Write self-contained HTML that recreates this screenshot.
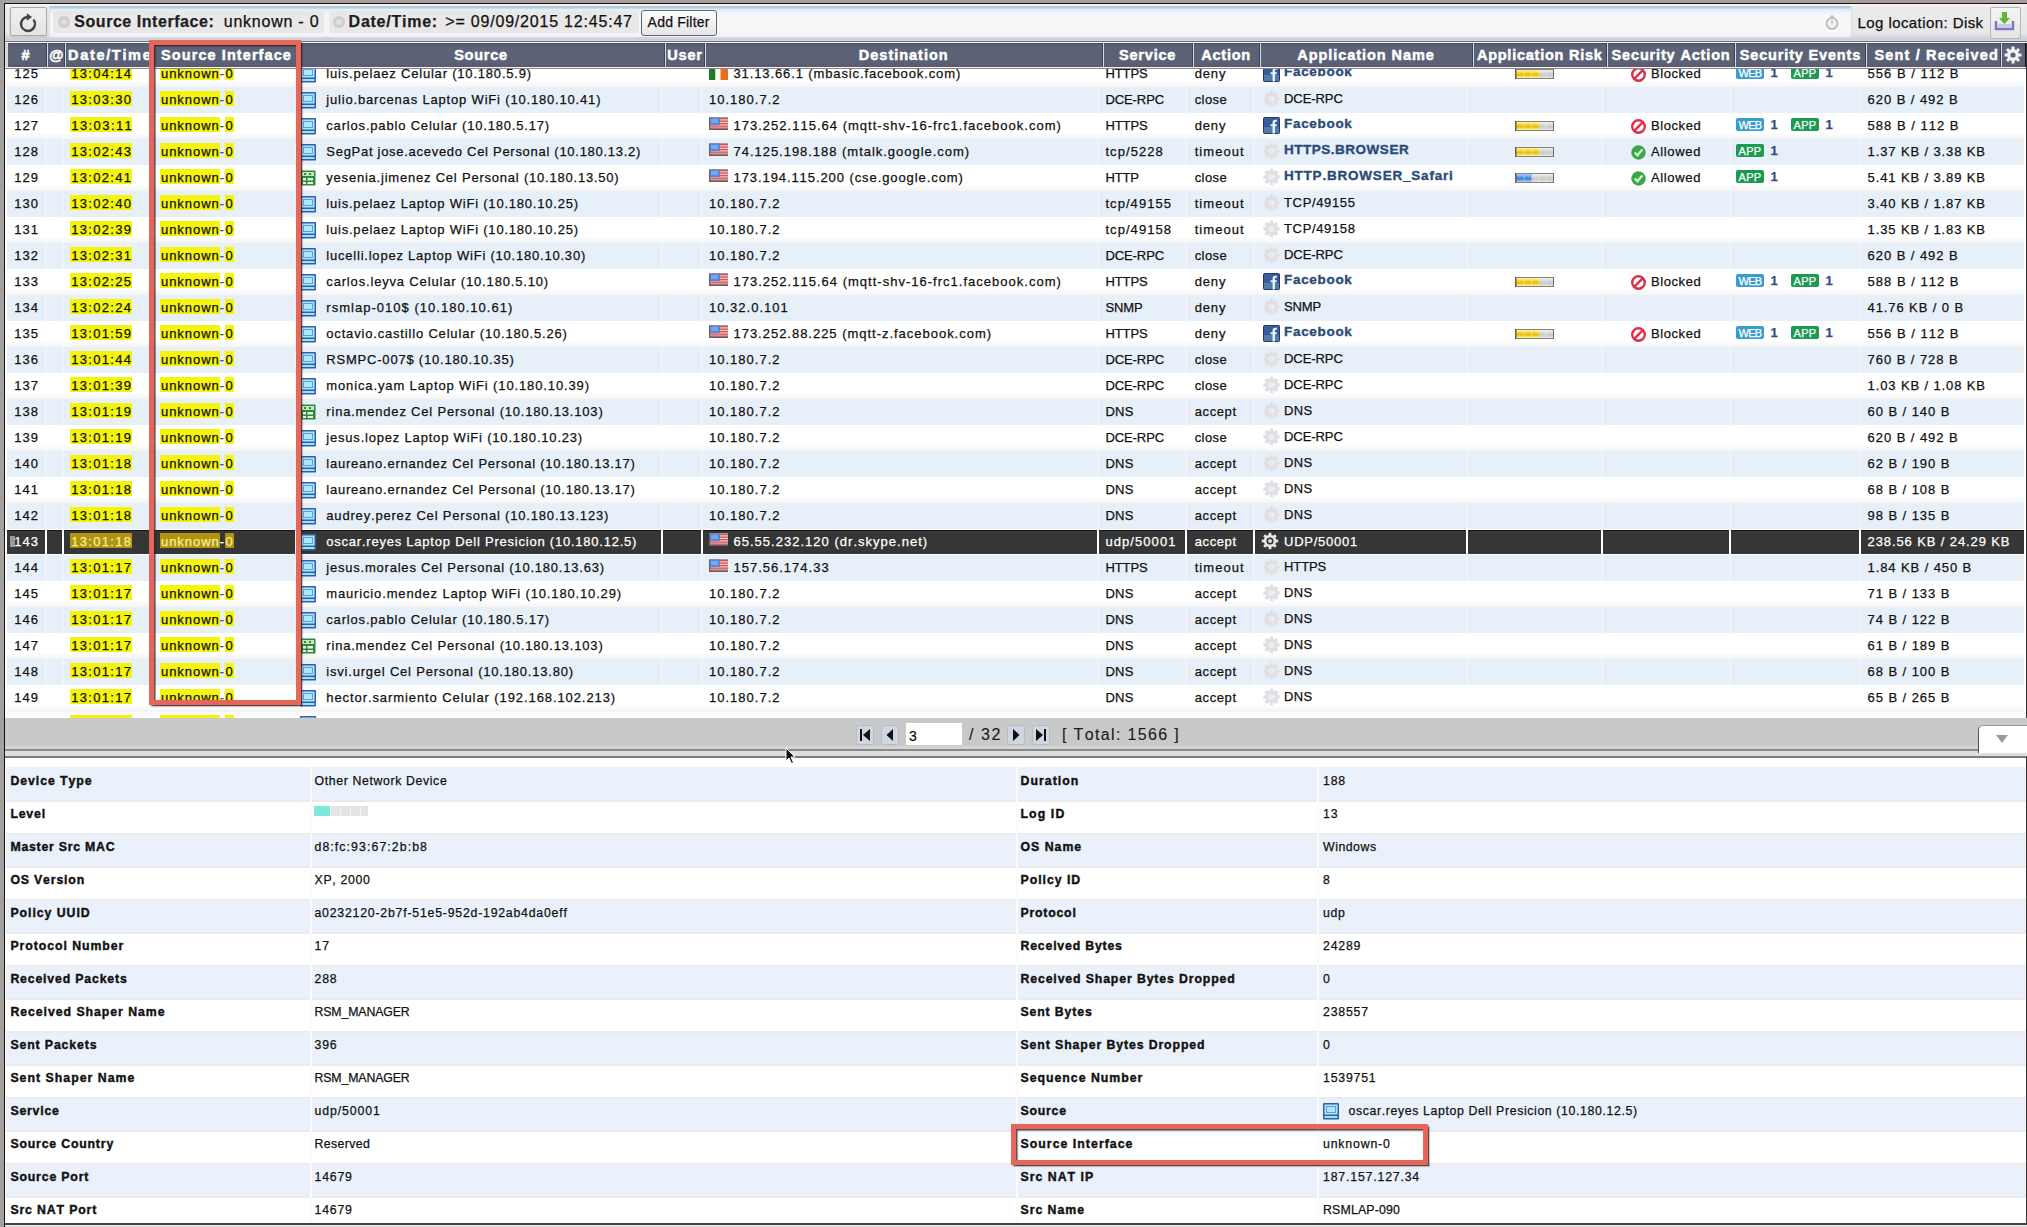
<!DOCTYPE html><html><head><meta charset="utf-8"><style>
html,body{margin:0;padding:0;}
body{width:2027px;height:1227px;overflow:hidden;position:relative;font-family:"Liberation Sans",sans-serif;font-kerning:none;}
div,span,svg{position:absolute;}
span{white-space:nowrap;line-height:20px;-webkit-text-stroke:0.25px currentColor;}
</style></head><body>
<div style="left:0px;top:0px;width:2027px;height:1227px;background:#a3a09e"></div>
<div style="left:65px;top:0px;width:1962px;height:3px;background:#a99d9b"></div>
<div style="left:4px;top:3px;width:2023px;height:1224px;background:#111"></div>
<div style="left:5px;top:4px;width:2022px;height:37px;background:linear-gradient(#f8f8f8,#ebebeb 3px,#e8e8e8 28px,#dcdde3 32px,#c9cdd8 36px)"></div>
<div style="left:10px;top:7px;width:35px;height:27px;background:linear-gradient(#f0f0f0,#e4e4e4);border:1px solid #a9a9a9;border-radius:2px;box-shadow:0 2px 2px #d8c8c8"></div>
<svg style="left:17px;top:12px" width="22" height="22" viewBox="0 0 22 22"><path d="M16.4 7.5 A7 7 0 1 1 10.4 5.0" fill="none" stroke="#444" stroke-width="2.4"/><path d="M15 5 L9.8 1.2 L9.8 8.8 Z" fill="#444"/></svg>
<div style="left:49px;top:5.5px;width:1801px;height:31px;background:linear-gradient(#b9c9de 0,#b9c9de 2px,#dcedf9 3px,#f5f6f7 8px,#f7f7f7 26px,#eef0fa 31px);border-left:1px solid #d8e0ee;border-right:1px solid #d8e0ee"></div>
<div style="left:53px;top:11px;width:271px;height:22px;background:#e9e7e7;border-radius:3px"></div>
<div style="left:329px;top:11px;width:310px;height:22px;background:#e9e7e7;border-radius:3px"></div>
<svg style="left:57px;top:15px" width="14" height="14" viewBox="0 0 14 14"><circle cx="7" cy="7" r="6" fill="#cdcdcd"/><circle cx="7" cy="7" r="3" fill="#e0e0e0"/></svg>
<svg style="left:332px;top:15px" width="14" height="14" viewBox="0 0 14 14"><circle cx="7" cy="7" r="6" fill="#cdcdcd"/><circle cx="7" cy="7" r="3" fill="#e0e0e0"/></svg>
<span style="left:74.30px;top:12.46px;font-size:16px;font-weight:bold;color:#1e1e1e;letter-spacing:0.546px;">Source Interface:</span>
<span style="left:223.80px;top:12.46px;font-size:16px;color:#111;letter-spacing:0.758px;">unknown - 0</span>
<span style="left:348.60px;top:12.46px;font-size:16px;font-weight:bold;color:#1e1e1e;letter-spacing:0.749px;">Date/Time:</span>
<span style="left:445.30px;top:12.46px;font-size:16px;color:#111;letter-spacing:0.798px;">&gt;= 09/09/2015 12:45:47</span>
<div style="left:641px;top:9.5px;width:74px;height:24px;background:linear-gradient(#fdfdfd,#e6e6e6);border:1.5px solid #5e6575;border-radius:3px"></div>
<span style="left:647.60px;top:12.15px;font-size:14px;color:#111;letter-spacing:0.209px;">Add Filter</span>
<svg style="left:1825px;top:15px" width="14" height="15" viewBox="0 0 14 15"><circle cx="7" cy="8.5" r="5.5" fill="#f0f0f0" stroke="#b8b8b8" stroke-width="1.6"/><rect x="5.5" y="0.5" width="3" height="2" fill="#b8b8b8"/><path d="M7 8.5 L7 5.5" stroke="#aaa" stroke-width="1.2"/></svg>
<span style="left:1857.50px;top:13.30px;font-size:15px;color:#111;letter-spacing:0.422px;">Log location: Disk</span>
<div style="left:1990px;top:7px;width:29px;height:30px;background:linear-gradient(#f4f4f4,#e4e4e4);border:1px solid #b4b4b4;border-radius:2px"></div>
<svg style="left:1993px;top:11px" width="23" height="22" viewBox="0 0 23 22"><path d="M3 10 V18 H20 V10" fill="none" stroke="#7a7ab8" stroke-width="2.4"/><rect x="5" y="13" width="13" height="3" fill="#c8c8ec"/><path d="M9 1 H14 V7 H17 L11.5 13 L6 7 H9 Z" fill="#5cb82e"/></svg>
<div style="left:5px;top:40px;width:2022px;height:1px;background:#d4d8e0"></div>
<div style="left:5px;top:67px;width:2021px;height:651px;background:#fff;overflow:hidden">
<div style="left:2px;top:-6px;width:2017px;height:26px;background:linear-gradient(#fff 75%,#f4f4f6)"></div>
<span style="left:9.30px;top:-3.50px;font-size:13px;color:#111;letter-spacing:0.974px;">125</span>
<div style="left:65.3px;top:-2px;width:61.439600000000006px;height:15px;background:#f4f40c"></div>
<span style="left:66.30px;top:-3.50px;font-size:13px;color:#111;letter-spacing:1.292px;">13:04:14</span>
<div style="left:155px;top:-2px;width:59.6821px;height:15px;background:#f4f40c"></div>
<div style="left:219.5387px;top:-2px;width:9.7044px;height:15px;background:#f4f40c"></div>
<span style="left:156.00px;top:-3.50px;font-size:13px;color:#111;letter-spacing:0.949px;">unknown</span>
<span style="left:214.68px;top:-3.50px;font-size:13px;color:#555;letter-spacing:1.527px;">-</span>
<span style="left:220.54px;top:-3.50px;font-size:13px;color:#111;letter-spacing:0.974px;">0</span>
<svg style="left:295px;top:-1px" width="16" height="17" viewBox="0 0 16 17"><rect x="0" y="0" width="16" height="16.5" rx="1" fill="#2e62a6"/><rect x="1.5" y="1.5" width="13" height="10" fill="#aee6fb"/><rect x="3.5" y="3.5" width="9" height="6" fill="none" stroke="#5aa2d8" stroke-width="1"/><rect x="1.5" y="13" width="13" height="2" fill="#9fe0fa"/></svg>
<span style="left:321.30px;top:-3.50px;font-size:13px;color:#111;letter-spacing:0.803px;">luis.pelaez Celular (10.180.5.9)</span>
<svg style="left:704px;top:1px" width="19" height="12" viewBox="0 0 19 12"><rect width="6.5" height="12" fill="#1f7a2a"/><rect x="6.5" width="5" height="12" fill="#f4fff0"/><rect x="11.5" width="7.5" height="12" fill="#e8701c"/></svg>
<span style="left:728.50px;top:-3.50px;font-size:13px;color:#111;letter-spacing:0.881px;">31.13.66.1 (mbasic.facebook.com)</span>
<span style="left:1100.40px;top:-3.50px;font-size:13px;color:#111;letter-spacing:-0.086px;">HTTPS</span>
<span style="left:1189.70px;top:-3.50px;font-size:13px;color:#111;letter-spacing:0.834px;">deny</span>
<svg style="left:1258px;top:-2px" width="17" height="17" viewBox="0 0 17 17"><rect x="0.5" y="0.5" width="16" height="16" rx="1" fill="#3a5c98" stroke="#223866"/><rect x="1" y="10" width="15" height="6" fill="#5478aa"/><path d="M9.6 16.5 V9.3 H7.6 V7.2 H9.6 V5.6 C9.6 3.6 10.6 2.7 12.4 2.7 H13.8 V4.7 H12.8 C12.1 4.7 11.9 5.1 11.9 5.7 V7.2 H13.8 L13.5 9.3 H11.9 V16.5 Z" fill="#eef8ff"/></svg>
<span style="left:1279.00px;top:-4.68px;font-size:13.5px;font-weight:bold;color:#2a4b78;letter-spacing:0.691px;-webkit-text-stroke:0.35px currentColor;">Facebook</span>
<svg style="left:1510px;top:2px" width="39" height="10" viewBox="0 0 39 10"><defs><linearGradient id="ry3" x1="0" y1="0" x2="0" y2="1"><stop offset="0" stop-color="#fff6a0"/><stop offset="0.6" stop-color="#e8b800"/><stop offset="1" stop-color="#fff6a0"/></linearGradient><linearGradient id="rg" x1="0" y1="0" x2="0" y2="1"><stop offset="0" stop-color="#f6f6f8"/><stop offset="0.6" stop-color="#c9cac4"/><stop offset="1" stop-color="#eeeeee"/></linearGradient></defs><rect x="0" y="0" width="39" height="10" fill="url(#rg)"/><rect x="1" y="1" width="23.4" height="8" fill="url(#ry3)"/><rect x="8.8" y="2" width="0.8" height="6" fill="rgba(255,255,255,.45)"/><rect x="16.1" y="2" width="0.8" height="6" fill="rgba(255,255,255,.45)"/><rect x="23.4" y="2" width="0.8" height="6" fill="rgba(255,255,255,.45)"/><rect x="30.7" y="2" width="0.8" height="6" fill="rgba(255,255,255,.45)"/><rect x="0" y="0" width="39" height="1" fill="#8a8676"/><rect x="0" y="9" width="39" height="1" fill="#8a8676"/><rect x="0" y="0" width="1.5" height="10" fill="#6e5e48"/><rect x="38" y="0" width="1" height="10" fill="#6a6a6a"/></svg>
<svg style="left:1626px;top:0px" width="15" height="15" viewBox="0 0 15 15"><circle cx="7.5" cy="7.5" r="6.3" fill="none" stroke="#d9304a" stroke-width="2.4"/><path d="M3.4 11.6 L11.6 3.4" stroke="#d9304a" stroke-width="2.4"/></svg>
<span style="left:1646.00px;top:-3.50px;font-size:13px;color:#111;letter-spacing:0.578px;">Blocked</span>
<div style="left:1731px;top:-1px;width:28px;height:13px;border-radius:2px;background:#3a9ccc;"></div>
<span style="left:1733.50px;top:-4.31px;font-size:11px;color:#fff;letter-spacing:-0.686px;">WEB</span>
<span style="left:1765.50px;top:-4.00px;font-size:13px;font-weight:bold;color:#3a4c86;letter-spacing:1.942px;">1</span>
<div style="left:1786px;top:-1px;width:28px;height:13px;border-radius:2px;background:#1c9a50;"></div>
<span style="left:1788.50px;top:-4.31px;font-size:11px;color:#fff;letter-spacing:0.329px;">APP</span>
<span style="left:1820.50px;top:-4.00px;font-size:13px;font-weight:bold;color:#3a4c86;letter-spacing:1.942px;">1</span>
<span style="left:1862.60px;top:-3.50px;font-size:13px;color:#111;letter-spacing:1.010px;">556 B / 112 B</span>
<div style="left:2px;top:20px;width:2017px;height:26px;background:#e7eff9"></div>
<div style="left:40px;top:20px;width:2px;height:26px;background:#f1f5fb"></div>
<div style="left:57px;top:20px;width:2px;height:26px;background:#f1f5fb"></div>
<div style="left:146px;top:20px;width:2px;height:26px;background:#f1f5fb"></div>
<div style="left:290px;top:20px;width:2px;height:26px;background:#f1f5fb"></div>
<div style="left:655.5px;top:20px;width:2px;height:26px;background:#f1f5fb"></div>
<div style="left:696px;top:20px;width:2px;height:26px;background:#f1f5fb"></div>
<div style="left:1092px;top:20px;width:2px;height:26px;background:#f1f5fb"></div>
<div style="left:1180px;top:20px;width:2px;height:26px;background:#f1f5fb"></div>
<div style="left:1248px;top:20px;width:2px;height:26px;background:#f1f5fb"></div>
<div style="left:1460.6px;top:20px;width:2px;height:26px;background:#f1f5fb"></div>
<div style="left:1596px;top:20px;width:2px;height:26px;background:#f1f5fb"></div>
<div style="left:1723.5px;top:20px;width:2px;height:26px;background:#f1f5fb"></div>
<div style="left:1853.5px;top:20px;width:2px;height:26px;background:#f1f5fb"></div>
<span style="left:9.30px;top:22.50px;font-size:13px;color:#111;letter-spacing:0.974px;">126</span>
<div style="left:65.3px;top:24px;width:61.439600000000006px;height:15px;background:#f4f40c"></div>
<span style="left:66.30px;top:22.50px;font-size:13px;color:#111;letter-spacing:1.292px;">13:03:30</span>
<div style="left:155px;top:24px;width:59.6821px;height:15px;background:#f4f40c"></div>
<div style="left:219.5387px;top:24px;width:9.7044px;height:15px;background:#f4f40c"></div>
<span style="left:156.00px;top:22.50px;font-size:13px;color:#111;letter-spacing:0.949px;">unknown</span>
<span style="left:214.68px;top:22.50px;font-size:13px;color:#555;letter-spacing:1.527px;">-</span>
<span style="left:220.54px;top:22.50px;font-size:13px;color:#111;letter-spacing:0.974px;">0</span>
<svg style="left:295px;top:25px" width="16" height="17" viewBox="0 0 16 17"><rect x="0" y="0" width="16" height="16.5" rx="1" fill="#2e62a6"/><rect x="1.5" y="1.5" width="13" height="10" fill="#aee6fb"/><rect x="3.5" y="3.5" width="9" height="6" fill="none" stroke="#5aa2d8" stroke-width="1"/><rect x="1.5" y="13" width="13" height="2" fill="#9fe0fa"/></svg>
<span style="left:321.30px;top:22.50px;font-size:13px;color:#111;letter-spacing:0.820px;">julio.barcenas Laptop WiFi (10.180.10.41)</span>
<span style="left:704.00px;top:22.50px;font-size:13px;color:#111;letter-spacing:1.007px;">10.180.7.2</span>
<span style="left:1100.40px;top:22.50px;font-size:13px;color:#111;letter-spacing:-0.074px;">DCE-RPC</span>
<span style="left:1189.70px;top:22.50px;font-size:13px;color:#111;letter-spacing:0.429px;">close</span>
<svg style="left:1258px;top:23px" width="17" height="18" viewBox="0 0 17 18"><g fill="#e0e0e4"><circle cx="8.5" cy="9" r="6.5"/><rect x="6.8" y="0.8" width="3.4" height="4" transform="rotate(0 8.5 9)"/><rect x="6.8" y="0.8" width="3.4" height="4" transform="rotate(45 8.5 9)"/><rect x="6.8" y="0.8" width="3.4" height="4" transform="rotate(90 8.5 9)"/><rect x="6.8" y="0.8" width="3.4" height="4" transform="rotate(135 8.5 9)"/><rect x="6.8" y="0.8" width="3.4" height="4" transform="rotate(180 8.5 9)"/><rect x="6.8" y="0.8" width="3.4" height="4" transform="rotate(225 8.5 9)"/><rect x="6.8" y="0.8" width="3.4" height="4" transform="rotate(270 8.5 9)"/><rect x="6.8" y="0.8" width="3.4" height="4" transform="rotate(315 8.5 9)"/></g><circle cx="8.5" cy="9" r="3" fill="#ededf0"/></svg>
<span style="left:1279.00px;top:21.50px;font-size:13px;color:#111;letter-spacing:-0.074px;">DCE-RPC</span>
<span style="left:1862.60px;top:22.50px;font-size:13px;color:#111;letter-spacing:0.936px;">620 B / 492 B</span>
<div style="left:2px;top:46px;width:2017px;height:26px;background:linear-gradient(#fff 75%,#f4f4f6)"></div>
<span style="left:9.30px;top:48.50px;font-size:13px;color:#111;letter-spacing:0.974px;">127</span>
<div style="left:65.3px;top:50px;width:61.439600000000006px;height:15px;background:#f4f40c"></div>
<span style="left:66.30px;top:48.50px;font-size:13px;color:#111;letter-spacing:1.412px;">13:03:11</span>
<div style="left:155px;top:50px;width:59.6821px;height:15px;background:#f4f40c"></div>
<div style="left:219.5387px;top:50px;width:9.7044px;height:15px;background:#f4f40c"></div>
<span style="left:156.00px;top:48.50px;font-size:13px;color:#111;letter-spacing:0.949px;">unknown</span>
<span style="left:214.68px;top:48.50px;font-size:13px;color:#555;letter-spacing:1.527px;">-</span>
<span style="left:220.54px;top:48.50px;font-size:13px;color:#111;letter-spacing:0.974px;">0</span>
<svg style="left:295px;top:51px" width="16" height="17" viewBox="0 0 16 17"><rect x="0" y="0" width="16" height="16.5" rx="1" fill="#2e62a6"/><rect x="1.5" y="1.5" width="13" height="10" fill="#aee6fb"/><rect x="3.5" y="3.5" width="9" height="6" fill="none" stroke="#5aa2d8" stroke-width="1"/><rect x="1.5" y="13" width="13" height="2" fill="#9fe0fa"/></svg>
<span style="left:321.30px;top:48.50px;font-size:13px;color:#111;letter-spacing:0.818px;">carlos.pablo Celular (10.180.5.17)</span>
<svg style="left:704px;top:50px" width="19" height="13" viewBox="0 0 19 13"><rect width="19" height="13" fill="#f6c8c8"/><rect y="1" width="19" height="1.3" fill="#c95a5a"/><rect y="3.5" width="19" height="1.3" fill="#c95a5a"/><rect y="6" width="19" height="1.3" fill="#c95a5a"/><rect y="8.5" width="19" height="1.3" fill="#c95a5a"/><rect y="10.5" width="19" height="1.3" fill="#c95a5a"/><rect x="0" y="0" width="11" height="8" fill="#5a86d8"/><rect x="2" y="2" width="7" height="4" fill="#76a8f2"/><rect x="0" y="0" width="1.2" height="13" fill="#6b6072"/><rect y="11.8" width="19" height="1.2" fill="#6a5a5a"/><rect width="19" height="0.8" fill="#9a8a9a"/></svg>
<span style="left:728.50px;top:48.50px;font-size:13px;color:#111;letter-spacing:1.011px;">173.252.115.64 (mqtt-shv-16-frc1.facebook.com)</span>
<span style="left:1100.40px;top:48.50px;font-size:13px;color:#111;letter-spacing:-0.086px;">HTTPS</span>
<span style="left:1189.70px;top:48.50px;font-size:13px;color:#111;letter-spacing:0.834px;">deny</span>
<svg style="left:1258px;top:50px" width="17" height="17" viewBox="0 0 17 17"><rect x="0.5" y="0.5" width="16" height="16" rx="1" fill="#3a5c98" stroke="#223866"/><rect x="1" y="10" width="15" height="6" fill="#5478aa"/><path d="M9.6 16.5 V9.3 H7.6 V7.2 H9.6 V5.6 C9.6 3.6 10.6 2.7 12.4 2.7 H13.8 V4.7 H12.8 C12.1 4.7 11.9 5.1 11.9 5.7 V7.2 H13.8 L13.5 9.3 H11.9 V16.5 Z" fill="#eef8ff"/></svg>
<span style="left:1279.00px;top:47.32px;font-size:13.5px;font-weight:bold;color:#2a4b78;letter-spacing:0.691px;-webkit-text-stroke:0.35px currentColor;">Facebook</span>
<svg style="left:1510px;top:54px" width="39" height="10" viewBox="0 0 39 10"><defs><linearGradient id="ry3" x1="0" y1="0" x2="0" y2="1"><stop offset="0" stop-color="#fff6a0"/><stop offset="0.6" stop-color="#e8b800"/><stop offset="1" stop-color="#fff6a0"/></linearGradient><linearGradient id="rg" x1="0" y1="0" x2="0" y2="1"><stop offset="0" stop-color="#f6f6f8"/><stop offset="0.6" stop-color="#c9cac4"/><stop offset="1" stop-color="#eeeeee"/></linearGradient></defs><rect x="0" y="0" width="39" height="10" fill="url(#rg)"/><rect x="1" y="1" width="23.4" height="8" fill="url(#ry3)"/><rect x="8.8" y="2" width="0.8" height="6" fill="rgba(255,255,255,.45)"/><rect x="16.1" y="2" width="0.8" height="6" fill="rgba(255,255,255,.45)"/><rect x="23.4" y="2" width="0.8" height="6" fill="rgba(255,255,255,.45)"/><rect x="30.7" y="2" width="0.8" height="6" fill="rgba(255,255,255,.45)"/><rect x="0" y="0" width="39" height="1" fill="#8a8676"/><rect x="0" y="9" width="39" height="1" fill="#8a8676"/><rect x="0" y="0" width="1.5" height="10" fill="#6e5e48"/><rect x="38" y="0" width="1" height="10" fill="#6a6a6a"/></svg>
<svg style="left:1626px;top:52px" width="15" height="15" viewBox="0 0 15 15"><circle cx="7.5" cy="7.5" r="6.3" fill="none" stroke="#d9304a" stroke-width="2.4"/><path d="M3.4 11.6 L11.6 3.4" stroke="#d9304a" stroke-width="2.4"/></svg>
<span style="left:1646.00px;top:48.50px;font-size:13px;color:#111;letter-spacing:0.578px;">Blocked</span>
<div style="left:1731px;top:51px;width:28px;height:13px;border-radius:2px;background:#3a9ccc;"></div>
<span style="left:1733.50px;top:47.69px;font-size:11px;color:#fff;letter-spacing:-0.686px;">WEB</span>
<span style="left:1765.50px;top:48.00px;font-size:13px;font-weight:bold;color:#3a4c86;letter-spacing:1.942px;">1</span>
<div style="left:1786px;top:51px;width:28px;height:13px;border-radius:2px;background:#1c9a50;"></div>
<span style="left:1788.50px;top:47.69px;font-size:11px;color:#fff;letter-spacing:0.329px;">APP</span>
<span style="left:1820.50px;top:48.00px;font-size:13px;font-weight:bold;color:#3a4c86;letter-spacing:1.942px;">1</span>
<span style="left:1862.60px;top:48.50px;font-size:13px;color:#111;letter-spacing:1.010px;">588 B / 112 B</span>
<div style="left:2px;top:72px;width:2017px;height:26px;background:#e7eff9"></div>
<div style="left:40px;top:72px;width:2px;height:26px;background:#f1f5fb"></div>
<div style="left:57px;top:72px;width:2px;height:26px;background:#f1f5fb"></div>
<div style="left:146px;top:72px;width:2px;height:26px;background:#f1f5fb"></div>
<div style="left:290px;top:72px;width:2px;height:26px;background:#f1f5fb"></div>
<div style="left:655.5px;top:72px;width:2px;height:26px;background:#f1f5fb"></div>
<div style="left:696px;top:72px;width:2px;height:26px;background:#f1f5fb"></div>
<div style="left:1092px;top:72px;width:2px;height:26px;background:#f1f5fb"></div>
<div style="left:1180px;top:72px;width:2px;height:26px;background:#f1f5fb"></div>
<div style="left:1248px;top:72px;width:2px;height:26px;background:#f1f5fb"></div>
<div style="left:1460.6px;top:72px;width:2px;height:26px;background:#f1f5fb"></div>
<div style="left:1596px;top:72px;width:2px;height:26px;background:#f1f5fb"></div>
<div style="left:1723.5px;top:72px;width:2px;height:26px;background:#f1f5fb"></div>
<div style="left:1853.5px;top:72px;width:2px;height:26px;background:#f1f5fb"></div>
<span style="left:9.30px;top:74.50px;font-size:13px;color:#111;letter-spacing:0.974px;">128</span>
<div style="left:65.3px;top:76px;width:61.439600000000006px;height:15px;background:#f4f40c"></div>
<span style="left:66.30px;top:74.50px;font-size:13px;color:#111;letter-spacing:1.292px;">13:02:43</span>
<div style="left:155px;top:76px;width:59.6821px;height:15px;background:#f4f40c"></div>
<div style="left:219.5387px;top:76px;width:9.7044px;height:15px;background:#f4f40c"></div>
<span style="left:156.00px;top:74.50px;font-size:13px;color:#111;letter-spacing:0.949px;">unknown</span>
<span style="left:214.68px;top:74.50px;font-size:13px;color:#555;letter-spacing:1.527px;">-</span>
<span style="left:220.54px;top:74.50px;font-size:13px;color:#111;letter-spacing:0.974px;">0</span>
<svg style="left:295px;top:77px" width="16" height="17" viewBox="0 0 16 17"><rect x="0" y="0" width="16" height="16.5" rx="1" fill="#2e62a6"/><rect x="1.5" y="1.5" width="13" height="10" fill="#aee6fb"/><rect x="3.5" y="3.5" width="9" height="6" fill="none" stroke="#5aa2d8" stroke-width="1"/><rect x="1.5" y="13" width="13" height="2" fill="#9fe0fa"/></svg>
<span style="left:321.30px;top:74.50px;font-size:13px;color:#111;letter-spacing:0.714px;">SegPat jose.acevedo Cel Personal (10.180.13.2)</span>
<svg style="left:704px;top:76px" width="19" height="13" viewBox="0 0 19 13"><rect width="19" height="13" fill="#f6c8c8"/><rect y="1" width="19" height="1.3" fill="#c95a5a"/><rect y="3.5" width="19" height="1.3" fill="#c95a5a"/><rect y="6" width="19" height="1.3" fill="#c95a5a"/><rect y="8.5" width="19" height="1.3" fill="#c95a5a"/><rect y="10.5" width="19" height="1.3" fill="#c95a5a"/><rect x="0" y="0" width="11" height="8" fill="#5a86d8"/><rect x="2" y="2" width="7" height="4" fill="#76a8f2"/><rect x="0" y="0" width="1.2" height="13" fill="#6b6072"/><rect y="11.8" width="19" height="1.2" fill="#6a5a5a"/><rect width="19" height="0.8" fill="#9a8a9a"/></svg>
<span style="left:728.50px;top:74.50px;font-size:13px;color:#111;letter-spacing:0.972px;">74.125.198.188 (mtalk.google.com)</span>
<span style="left:1100.40px;top:74.50px;font-size:13px;color:#111;letter-spacing:1.080px;">tcp/5228</span>
<span style="left:1189.70px;top:74.50px;font-size:13px;color:#111;letter-spacing:1.043px;">timeout</span>
<svg style="left:1258px;top:75px" width="17" height="18" viewBox="0 0 17 18"><g fill="#e0e0e4"><circle cx="8.5" cy="9" r="6.5"/><rect x="6.8" y="0.8" width="3.4" height="4" transform="rotate(0 8.5 9)"/><rect x="6.8" y="0.8" width="3.4" height="4" transform="rotate(45 8.5 9)"/><rect x="6.8" y="0.8" width="3.4" height="4" transform="rotate(90 8.5 9)"/><rect x="6.8" y="0.8" width="3.4" height="4" transform="rotate(135 8.5 9)"/><rect x="6.8" y="0.8" width="3.4" height="4" transform="rotate(180 8.5 9)"/><rect x="6.8" y="0.8" width="3.4" height="4" transform="rotate(225 8.5 9)"/><rect x="6.8" y="0.8" width="3.4" height="4" transform="rotate(270 8.5 9)"/><rect x="6.8" y="0.8" width="3.4" height="4" transform="rotate(315 8.5 9)"/></g><circle cx="8.5" cy="9" r="3" fill="#ededf0"/></svg>
<span style="left:1279.00px;top:73.32px;font-size:13.5px;font-weight:bold;color:#2a4b78;letter-spacing:0.512px;-webkit-text-stroke:0.35px currentColor;">HTTPS.BROWSER</span>
<svg style="left:1510px;top:80px" width="39" height="10" viewBox="0 0 39 10"><defs><linearGradient id="ry3" x1="0" y1="0" x2="0" y2="1"><stop offset="0" stop-color="#fff6a0"/><stop offset="0.6" stop-color="#e8b800"/><stop offset="1" stop-color="#fff6a0"/></linearGradient><linearGradient id="rg" x1="0" y1="0" x2="0" y2="1"><stop offset="0" stop-color="#f6f6f8"/><stop offset="0.6" stop-color="#c9cac4"/><stop offset="1" stop-color="#eeeeee"/></linearGradient></defs><rect x="0" y="0" width="39" height="10" fill="url(#rg)"/><rect x="1" y="1" width="23.4" height="8" fill="url(#ry3)"/><rect x="8.8" y="2" width="0.8" height="6" fill="rgba(255,255,255,.45)"/><rect x="16.1" y="2" width="0.8" height="6" fill="rgba(255,255,255,.45)"/><rect x="23.4" y="2" width="0.8" height="6" fill="rgba(255,255,255,.45)"/><rect x="30.7" y="2" width="0.8" height="6" fill="rgba(255,255,255,.45)"/><rect x="0" y="0" width="39" height="1" fill="#8a8676"/><rect x="0" y="9" width="39" height="1" fill="#8a8676"/><rect x="0" y="0" width="1.5" height="10" fill="#6e5e48"/><rect x="38" y="0" width="1" height="10" fill="#6a6a6a"/></svg>
<svg style="left:1626px;top:78px" width="15" height="15" viewBox="0 0 15 15"><circle cx="7.5" cy="7.5" r="7.2" fill="#3aa64a"/><path d="M3.8 7.6 L6.4 10.3 L11.4 4.6" fill="none" stroke="#d8ffc8" stroke-width="2.2"/></svg>
<span style="left:1646.00px;top:74.50px;font-size:13px;color:#111;letter-spacing:0.639px;">Allowed</span>
<div style="left:1731px;top:77px;width:28px;height:13px;border-radius:2px;background:#1c9a50;"></div>
<span style="left:1733.50px;top:73.69px;font-size:11px;color:#fff;letter-spacing:0.329px;">APP</span>
<span style="left:1765.50px;top:74.00px;font-size:13px;font-weight:bold;color:#3a4c86;letter-spacing:1.942px;">1</span>
<span style="left:1862.60px;top:74.50px;font-size:13px;color:#111;letter-spacing:0.875px;">1.37 KB / 3.38 KB</span>
<div style="left:2px;top:98px;width:2017px;height:26px;background:linear-gradient(#fff 75%,#f4f4f6)"></div>
<span style="left:9.30px;top:100.50px;font-size:13px;color:#111;letter-spacing:0.974px;">129</span>
<div style="left:65.3px;top:102px;width:61.439600000000006px;height:15px;background:#f4f40c"></div>
<span style="left:66.30px;top:100.50px;font-size:13px;color:#111;letter-spacing:1.292px;">13:02:41</span>
<div style="left:155px;top:102px;width:59.6821px;height:15px;background:#f4f40c"></div>
<div style="left:219.5387px;top:102px;width:9.7044px;height:15px;background:#f4f40c"></div>
<span style="left:156.00px;top:100.50px;font-size:13px;color:#111;letter-spacing:0.949px;">unknown</span>
<span style="left:214.68px;top:100.50px;font-size:13px;color:#555;letter-spacing:1.527px;">-</span>
<span style="left:220.54px;top:100.50px;font-size:13px;color:#111;letter-spacing:0.974px;">0</span>
<svg style="left:295px;top:103px" width="16" height="16" viewBox="0 0 16 16"><rect x="0.5" y="0.5" width="15" height="15" fill="#2c8a3c"/><rect x="2" y="2" width="12" height="4" fill="#c8e8b8"/><rect x="3" y="8" width="10" height="6" fill="#e9f7e2"/><rect x="6" y="8" width="1.5" height="6" fill="#2c8a3c"/><rect x="3" y="10.5" width="10" height="1.5" fill="#2c8a3c"/><rect x="4" y="3" width="2" height="2" fill="#2c8a3c"/><rect x="9" y="3" width="2" height="2" fill="#2c8a3c"/></svg>
<span style="left:321.30px;top:100.50px;font-size:13px;color:#111;letter-spacing:0.785px;">yesenia.jimenez Cel Personal (10.180.13.50)</span>
<svg style="left:704px;top:102px" width="19" height="13" viewBox="0 0 19 13"><rect width="19" height="13" fill="#f6c8c8"/><rect y="1" width="19" height="1.3" fill="#c95a5a"/><rect y="3.5" width="19" height="1.3" fill="#c95a5a"/><rect y="6" width="19" height="1.3" fill="#c95a5a"/><rect y="8.5" width="19" height="1.3" fill="#c95a5a"/><rect y="10.5" width="19" height="1.3" fill="#c95a5a"/><rect x="0" y="0" width="11" height="8" fill="#5a86d8"/><rect x="2" y="2" width="7" height="4" fill="#76a8f2"/><rect x="0" y="0" width="1.2" height="13" fill="#6b6072"/><rect y="11.8" width="19" height="1.2" fill="#6a5a5a"/><rect width="19" height="0.8" fill="#9a8a9a"/></svg>
<span style="left:728.50px;top:100.50px;font-size:13px;color:#111;letter-spacing:0.919px;">173.194.115.200 (cse.google.com)</span>
<span style="left:1100.40px;top:100.50px;font-size:13px;color:#111;letter-spacing:-0.146px;">HTTP</span>
<span style="left:1189.70px;top:100.50px;font-size:13px;color:#111;letter-spacing:0.429px;">close</span>
<svg style="left:1258px;top:101px" width="17" height="18" viewBox="0 0 17 18"><g fill="#e0e0e4"><circle cx="8.5" cy="9" r="6.5"/><rect x="6.8" y="0.8" width="3.4" height="4" transform="rotate(0 8.5 9)"/><rect x="6.8" y="0.8" width="3.4" height="4" transform="rotate(45 8.5 9)"/><rect x="6.8" y="0.8" width="3.4" height="4" transform="rotate(90 8.5 9)"/><rect x="6.8" y="0.8" width="3.4" height="4" transform="rotate(135 8.5 9)"/><rect x="6.8" y="0.8" width="3.4" height="4" transform="rotate(180 8.5 9)"/><rect x="6.8" y="0.8" width="3.4" height="4" transform="rotate(225 8.5 9)"/><rect x="6.8" y="0.8" width="3.4" height="4" transform="rotate(270 8.5 9)"/><rect x="6.8" y="0.8" width="3.4" height="4" transform="rotate(315 8.5 9)"/></g><circle cx="8.5" cy="9" r="3" fill="#ededf0"/></svg>
<span style="left:1279.00px;top:99.32px;font-size:13.5px;font-weight:bold;color:#2a4b78;letter-spacing:0.792px;-webkit-text-stroke:0.35px currentColor;">HTTP.BROWSER_Safari</span>
<svg style="left:1510px;top:106px" width="39" height="10" viewBox="0 0 39 10"><defs><linearGradient id="rb2" x1="0" y1="0" x2="0" y2="1"><stop offset="0" stop-color="#a8d0ff"/><stop offset="0.6" stop-color="#3a7ad8"/><stop offset="1" stop-color="#a8d0ff"/></linearGradient><linearGradient id="rg" x1="0" y1="0" x2="0" y2="1"><stop offset="0" stop-color="#f6f6f8"/><stop offset="0.6" stop-color="#c9cac4"/><stop offset="1" stop-color="#eeeeee"/></linearGradient></defs><rect x="0" y="0" width="39" height="10" fill="url(#rg)"/><rect x="1" y="1" width="16.1" height="8" fill="url(#rb2)"/><rect x="8.8" y="2" width="0.8" height="6" fill="rgba(255,255,255,.45)"/><rect x="16.1" y="2" width="0.8" height="6" fill="rgba(255,255,255,.45)"/><rect x="23.4" y="2" width="0.8" height="6" fill="rgba(255,255,255,.45)"/><rect x="30.7" y="2" width="0.8" height="6" fill="rgba(255,255,255,.45)"/><rect x="0" y="0" width="39" height="1" fill="#8a8676"/><rect x="0" y="9" width="39" height="1" fill="#8a8676"/><rect x="0" y="0" width="1.5" height="10" fill="#6e5e48"/><rect x="38" y="0" width="1" height="10" fill="#6a6a6a"/></svg>
<svg style="left:1626px;top:104px" width="15" height="15" viewBox="0 0 15 15"><circle cx="7.5" cy="7.5" r="7.2" fill="#3aa64a"/><path d="M3.8 7.6 L6.4 10.3 L11.4 4.6" fill="none" stroke="#d8ffc8" stroke-width="2.2"/></svg>
<span style="left:1646.00px;top:100.50px;font-size:13px;color:#111;letter-spacing:0.639px;">Allowed</span>
<div style="left:1731px;top:103px;width:28px;height:13px;border-radius:2px;background:#1c9a50;"></div>
<span style="left:1733.50px;top:99.69px;font-size:11px;color:#fff;letter-spacing:0.329px;">APP</span>
<span style="left:1765.50px;top:100.00px;font-size:13px;font-weight:bold;color:#3a4c86;letter-spacing:1.942px;">1</span>
<span style="left:1862.60px;top:100.50px;font-size:13px;color:#111;letter-spacing:0.875px;">5.41 KB / 3.89 KB</span>
<div style="left:2px;top:124px;width:2017px;height:26px;background:#e7eff9"></div>
<div style="left:40px;top:124px;width:2px;height:26px;background:#f1f5fb"></div>
<div style="left:57px;top:124px;width:2px;height:26px;background:#f1f5fb"></div>
<div style="left:146px;top:124px;width:2px;height:26px;background:#f1f5fb"></div>
<div style="left:290px;top:124px;width:2px;height:26px;background:#f1f5fb"></div>
<div style="left:655.5px;top:124px;width:2px;height:26px;background:#f1f5fb"></div>
<div style="left:696px;top:124px;width:2px;height:26px;background:#f1f5fb"></div>
<div style="left:1092px;top:124px;width:2px;height:26px;background:#f1f5fb"></div>
<div style="left:1180px;top:124px;width:2px;height:26px;background:#f1f5fb"></div>
<div style="left:1248px;top:124px;width:2px;height:26px;background:#f1f5fb"></div>
<div style="left:1460.6px;top:124px;width:2px;height:26px;background:#f1f5fb"></div>
<div style="left:1596px;top:124px;width:2px;height:26px;background:#f1f5fb"></div>
<div style="left:1723.5px;top:124px;width:2px;height:26px;background:#f1f5fb"></div>
<div style="left:1853.5px;top:124px;width:2px;height:26px;background:#f1f5fb"></div>
<span style="left:9.30px;top:126.50px;font-size:13px;color:#111;letter-spacing:0.974px;">130</span>
<div style="left:65.3px;top:128px;width:61.439600000000006px;height:15px;background:#f4f40c"></div>
<span style="left:66.30px;top:126.50px;font-size:13px;color:#111;letter-spacing:1.292px;">13:02:40</span>
<div style="left:155px;top:128px;width:59.6821px;height:15px;background:#f4f40c"></div>
<div style="left:219.5387px;top:128px;width:9.7044px;height:15px;background:#f4f40c"></div>
<span style="left:156.00px;top:126.50px;font-size:13px;color:#111;letter-spacing:0.949px;">unknown</span>
<span style="left:214.68px;top:126.50px;font-size:13px;color:#555;letter-spacing:1.527px;">-</span>
<span style="left:220.54px;top:126.50px;font-size:13px;color:#111;letter-spacing:0.974px;">0</span>
<svg style="left:295px;top:129px" width="16" height="17" viewBox="0 0 16 17"><rect x="0" y="0" width="16" height="16.5" rx="1" fill="#2e62a6"/><rect x="1.5" y="1.5" width="13" height="10" fill="#aee6fb"/><rect x="3.5" y="3.5" width="9" height="6" fill="none" stroke="#5aa2d8" stroke-width="1"/><rect x="1.5" y="13" width="13" height="2" fill="#9fe0fa"/></svg>
<span style="left:321.30px;top:126.50px;font-size:13px;color:#111;letter-spacing:0.789px;">luis.pelaez Laptop WiFi (10.180.10.25)</span>
<span style="left:704.00px;top:126.50px;font-size:13px;color:#111;letter-spacing:1.007px;">10.180.7.2</span>
<span style="left:1100.40px;top:126.50px;font-size:13px;color:#111;letter-spacing:1.068px;">tcp/49155</span>
<span style="left:1189.70px;top:126.50px;font-size:13px;color:#111;letter-spacing:1.043px;">timeout</span>
<svg style="left:1258px;top:127px" width="17" height="18" viewBox="0 0 17 18"><g fill="#e0e0e4"><circle cx="8.5" cy="9" r="6.5"/><rect x="6.8" y="0.8" width="3.4" height="4" transform="rotate(0 8.5 9)"/><rect x="6.8" y="0.8" width="3.4" height="4" transform="rotate(45 8.5 9)"/><rect x="6.8" y="0.8" width="3.4" height="4" transform="rotate(90 8.5 9)"/><rect x="6.8" y="0.8" width="3.4" height="4" transform="rotate(135 8.5 9)"/><rect x="6.8" y="0.8" width="3.4" height="4" transform="rotate(180 8.5 9)"/><rect x="6.8" y="0.8" width="3.4" height="4" transform="rotate(225 8.5 9)"/><rect x="6.8" y="0.8" width="3.4" height="4" transform="rotate(270 8.5 9)"/><rect x="6.8" y="0.8" width="3.4" height="4" transform="rotate(315 8.5 9)"/></g><circle cx="8.5" cy="9" r="3" fill="#ededf0"/></svg>
<span style="left:1279.00px;top:125.50px;font-size:13px;color:#111;letter-spacing:0.649px;">TCP/49155</span>
<span style="left:1862.60px;top:126.50px;font-size:13px;color:#111;letter-spacing:0.875px;">3.40 KB / 1.87 KB</span>
<div style="left:2px;top:150px;width:2017px;height:26px;background:linear-gradient(#fff 75%,#f4f4f6)"></div>
<span style="left:9.30px;top:152.50px;font-size:13px;color:#111;letter-spacing:0.974px;">131</span>
<div style="left:65.3px;top:154px;width:61.439600000000006px;height:15px;background:#f4f40c"></div>
<span style="left:66.30px;top:152.50px;font-size:13px;color:#111;letter-spacing:1.292px;">13:02:39</span>
<div style="left:155px;top:154px;width:59.6821px;height:15px;background:#f4f40c"></div>
<div style="left:219.5387px;top:154px;width:9.7044px;height:15px;background:#f4f40c"></div>
<span style="left:156.00px;top:152.50px;font-size:13px;color:#111;letter-spacing:0.949px;">unknown</span>
<span style="left:214.68px;top:152.50px;font-size:13px;color:#555;letter-spacing:1.527px;">-</span>
<span style="left:220.54px;top:152.50px;font-size:13px;color:#111;letter-spacing:0.974px;">0</span>
<svg style="left:295px;top:155px" width="16" height="17" viewBox="0 0 16 17"><rect x="0" y="0" width="16" height="16.5" rx="1" fill="#2e62a6"/><rect x="1.5" y="1.5" width="13" height="10" fill="#aee6fb"/><rect x="3.5" y="3.5" width="9" height="6" fill="none" stroke="#5aa2d8" stroke-width="1"/><rect x="1.5" y="13" width="13" height="2" fill="#9fe0fa"/></svg>
<span style="left:321.30px;top:152.50px;font-size:13px;color:#111;letter-spacing:0.789px;">luis.pelaez Laptop WiFi (10.180.10.25)</span>
<span style="left:704.00px;top:152.50px;font-size:13px;color:#111;letter-spacing:1.007px;">10.180.7.2</span>
<span style="left:1100.40px;top:152.50px;font-size:13px;color:#111;letter-spacing:1.068px;">tcp/49158</span>
<span style="left:1189.70px;top:152.50px;font-size:13px;color:#111;letter-spacing:1.043px;">timeout</span>
<svg style="left:1258px;top:153px" width="17" height="18" viewBox="0 0 17 18"><g fill="#e0e0e4"><circle cx="8.5" cy="9" r="6.5"/><rect x="6.8" y="0.8" width="3.4" height="4" transform="rotate(0 8.5 9)"/><rect x="6.8" y="0.8" width="3.4" height="4" transform="rotate(45 8.5 9)"/><rect x="6.8" y="0.8" width="3.4" height="4" transform="rotate(90 8.5 9)"/><rect x="6.8" y="0.8" width="3.4" height="4" transform="rotate(135 8.5 9)"/><rect x="6.8" y="0.8" width="3.4" height="4" transform="rotate(180 8.5 9)"/><rect x="6.8" y="0.8" width="3.4" height="4" transform="rotate(225 8.5 9)"/><rect x="6.8" y="0.8" width="3.4" height="4" transform="rotate(270 8.5 9)"/><rect x="6.8" y="0.8" width="3.4" height="4" transform="rotate(315 8.5 9)"/></g><circle cx="8.5" cy="9" r="3" fill="#ededf0"/></svg>
<span style="left:1279.00px;top:151.50px;font-size:13px;color:#111;letter-spacing:0.649px;">TCP/49158</span>
<span style="left:1862.60px;top:152.50px;font-size:13px;color:#111;letter-spacing:0.875px;">1.35 KB / 1.83 KB</span>
<div style="left:2px;top:176px;width:2017px;height:26px;background:#e7eff9"></div>
<div style="left:40px;top:176px;width:2px;height:26px;background:#f1f5fb"></div>
<div style="left:57px;top:176px;width:2px;height:26px;background:#f1f5fb"></div>
<div style="left:146px;top:176px;width:2px;height:26px;background:#f1f5fb"></div>
<div style="left:290px;top:176px;width:2px;height:26px;background:#f1f5fb"></div>
<div style="left:655.5px;top:176px;width:2px;height:26px;background:#f1f5fb"></div>
<div style="left:696px;top:176px;width:2px;height:26px;background:#f1f5fb"></div>
<div style="left:1092px;top:176px;width:2px;height:26px;background:#f1f5fb"></div>
<div style="left:1180px;top:176px;width:2px;height:26px;background:#f1f5fb"></div>
<div style="left:1248px;top:176px;width:2px;height:26px;background:#f1f5fb"></div>
<div style="left:1460.6px;top:176px;width:2px;height:26px;background:#f1f5fb"></div>
<div style="left:1596px;top:176px;width:2px;height:26px;background:#f1f5fb"></div>
<div style="left:1723.5px;top:176px;width:2px;height:26px;background:#f1f5fb"></div>
<div style="left:1853.5px;top:176px;width:2px;height:26px;background:#f1f5fb"></div>
<span style="left:9.30px;top:178.50px;font-size:13px;color:#111;letter-spacing:0.974px;">132</span>
<div style="left:65.3px;top:180px;width:61.439600000000006px;height:15px;background:#f4f40c"></div>
<span style="left:66.30px;top:178.50px;font-size:13px;color:#111;letter-spacing:1.292px;">13:02:31</span>
<div style="left:155px;top:180px;width:59.6821px;height:15px;background:#f4f40c"></div>
<div style="left:219.5387px;top:180px;width:9.7044px;height:15px;background:#f4f40c"></div>
<span style="left:156.00px;top:178.50px;font-size:13px;color:#111;letter-spacing:0.949px;">unknown</span>
<span style="left:214.68px;top:178.50px;font-size:13px;color:#555;letter-spacing:1.527px;">-</span>
<span style="left:220.54px;top:178.50px;font-size:13px;color:#111;letter-spacing:0.974px;">0</span>
<svg style="left:295px;top:181px" width="16" height="17" viewBox="0 0 16 17"><rect x="0" y="0" width="16" height="16.5" rx="1" fill="#2e62a6"/><rect x="1.5" y="1.5" width="13" height="10" fill="#aee6fb"/><rect x="3.5" y="3.5" width="9" height="6" fill="none" stroke="#5aa2d8" stroke-width="1"/><rect x="1.5" y="13" width="13" height="2" fill="#9fe0fa"/></svg>
<span style="left:321.30px;top:178.50px;font-size:13px;color:#111;letter-spacing:0.784px;">lucelli.lopez Laptop WiFi (10.180.10.30)</span>
<span style="left:704.00px;top:178.50px;font-size:13px;color:#111;letter-spacing:1.007px;">10.180.7.2</span>
<span style="left:1100.40px;top:178.50px;font-size:13px;color:#111;letter-spacing:-0.074px;">DCE-RPC</span>
<span style="left:1189.70px;top:178.50px;font-size:13px;color:#111;letter-spacing:0.429px;">close</span>
<svg style="left:1258px;top:179px" width="17" height="18" viewBox="0 0 17 18"><g fill="#e0e0e4"><circle cx="8.5" cy="9" r="6.5"/><rect x="6.8" y="0.8" width="3.4" height="4" transform="rotate(0 8.5 9)"/><rect x="6.8" y="0.8" width="3.4" height="4" transform="rotate(45 8.5 9)"/><rect x="6.8" y="0.8" width="3.4" height="4" transform="rotate(90 8.5 9)"/><rect x="6.8" y="0.8" width="3.4" height="4" transform="rotate(135 8.5 9)"/><rect x="6.8" y="0.8" width="3.4" height="4" transform="rotate(180 8.5 9)"/><rect x="6.8" y="0.8" width="3.4" height="4" transform="rotate(225 8.5 9)"/><rect x="6.8" y="0.8" width="3.4" height="4" transform="rotate(270 8.5 9)"/><rect x="6.8" y="0.8" width="3.4" height="4" transform="rotate(315 8.5 9)"/></g><circle cx="8.5" cy="9" r="3" fill="#ededf0"/></svg>
<span style="left:1279.00px;top:177.50px;font-size:13px;color:#111;letter-spacing:-0.074px;">DCE-RPC</span>
<span style="left:1862.60px;top:178.50px;font-size:13px;color:#111;letter-spacing:0.936px;">620 B / 492 B</span>
<div style="left:2px;top:202px;width:2017px;height:26px;background:linear-gradient(#fff 75%,#f4f4f6)"></div>
<span style="left:9.30px;top:204.50px;font-size:13px;color:#111;letter-spacing:0.974px;">133</span>
<div style="left:65.3px;top:206px;width:61.439600000000006px;height:15px;background:#f4f40c"></div>
<span style="left:66.30px;top:204.50px;font-size:13px;color:#111;letter-spacing:1.292px;">13:02:25</span>
<div style="left:155px;top:206px;width:59.6821px;height:15px;background:#f4f40c"></div>
<div style="left:219.5387px;top:206px;width:9.7044px;height:15px;background:#f4f40c"></div>
<span style="left:156.00px;top:204.50px;font-size:13px;color:#111;letter-spacing:0.949px;">unknown</span>
<span style="left:214.68px;top:204.50px;font-size:13px;color:#555;letter-spacing:1.527px;">-</span>
<span style="left:220.54px;top:204.50px;font-size:13px;color:#111;letter-spacing:0.974px;">0</span>
<svg style="left:295px;top:207px" width="16" height="17" viewBox="0 0 16 17"><rect x="0" y="0" width="16" height="16.5" rx="1" fill="#2e62a6"/><rect x="1.5" y="1.5" width="13" height="10" fill="#aee6fb"/><rect x="3.5" y="3.5" width="9" height="6" fill="none" stroke="#5aa2d8" stroke-width="1"/><rect x="1.5" y="13" width="13" height="2" fill="#9fe0fa"/></svg>
<span style="left:321.30px;top:204.50px;font-size:13px;color:#111;letter-spacing:0.833px;">carlos.leyva Celular (10.180.5.10)</span>
<svg style="left:704px;top:206px" width="19" height="13" viewBox="0 0 19 13"><rect width="19" height="13" fill="#f6c8c8"/><rect y="1" width="19" height="1.3" fill="#c95a5a"/><rect y="3.5" width="19" height="1.3" fill="#c95a5a"/><rect y="6" width="19" height="1.3" fill="#c95a5a"/><rect y="8.5" width="19" height="1.3" fill="#c95a5a"/><rect y="10.5" width="19" height="1.3" fill="#c95a5a"/><rect x="0" y="0" width="11" height="8" fill="#5a86d8"/><rect x="2" y="2" width="7" height="4" fill="#76a8f2"/><rect x="0" y="0" width="1.2" height="13" fill="#6b6072"/><rect y="11.8" width="19" height="1.2" fill="#6a5a5a"/><rect width="19" height="0.8" fill="#9a8a9a"/></svg>
<span style="left:728.50px;top:204.50px;font-size:13px;color:#111;letter-spacing:1.011px;">173.252.115.64 (mqtt-shv-16-frc1.facebook.com)</span>
<span style="left:1100.40px;top:204.50px;font-size:13px;color:#111;letter-spacing:-0.086px;">HTTPS</span>
<span style="left:1189.70px;top:204.50px;font-size:13px;color:#111;letter-spacing:0.834px;">deny</span>
<svg style="left:1258px;top:206px" width="17" height="17" viewBox="0 0 17 17"><rect x="0.5" y="0.5" width="16" height="16" rx="1" fill="#3a5c98" stroke="#223866"/><rect x="1" y="10" width="15" height="6" fill="#5478aa"/><path d="M9.6 16.5 V9.3 H7.6 V7.2 H9.6 V5.6 C9.6 3.6 10.6 2.7 12.4 2.7 H13.8 V4.7 H12.8 C12.1 4.7 11.9 5.1 11.9 5.7 V7.2 H13.8 L13.5 9.3 H11.9 V16.5 Z" fill="#eef8ff"/></svg>
<span style="left:1279.00px;top:203.32px;font-size:13.5px;font-weight:bold;color:#2a4b78;letter-spacing:0.691px;-webkit-text-stroke:0.35px currentColor;">Facebook</span>
<svg style="left:1510px;top:210px" width="39" height="10" viewBox="0 0 39 10"><defs><linearGradient id="ry3" x1="0" y1="0" x2="0" y2="1"><stop offset="0" stop-color="#fff6a0"/><stop offset="0.6" stop-color="#e8b800"/><stop offset="1" stop-color="#fff6a0"/></linearGradient><linearGradient id="rg" x1="0" y1="0" x2="0" y2="1"><stop offset="0" stop-color="#f6f6f8"/><stop offset="0.6" stop-color="#c9cac4"/><stop offset="1" stop-color="#eeeeee"/></linearGradient></defs><rect x="0" y="0" width="39" height="10" fill="url(#rg)"/><rect x="1" y="1" width="23.4" height="8" fill="url(#ry3)"/><rect x="8.8" y="2" width="0.8" height="6" fill="rgba(255,255,255,.45)"/><rect x="16.1" y="2" width="0.8" height="6" fill="rgba(255,255,255,.45)"/><rect x="23.4" y="2" width="0.8" height="6" fill="rgba(255,255,255,.45)"/><rect x="30.7" y="2" width="0.8" height="6" fill="rgba(255,255,255,.45)"/><rect x="0" y="0" width="39" height="1" fill="#8a8676"/><rect x="0" y="9" width="39" height="1" fill="#8a8676"/><rect x="0" y="0" width="1.5" height="10" fill="#6e5e48"/><rect x="38" y="0" width="1" height="10" fill="#6a6a6a"/></svg>
<svg style="left:1626px;top:208px" width="15" height="15" viewBox="0 0 15 15"><circle cx="7.5" cy="7.5" r="6.3" fill="none" stroke="#d9304a" stroke-width="2.4"/><path d="M3.4 11.6 L11.6 3.4" stroke="#d9304a" stroke-width="2.4"/></svg>
<span style="left:1646.00px;top:204.50px;font-size:13px;color:#111;letter-spacing:0.578px;">Blocked</span>
<div style="left:1731px;top:207px;width:28px;height:13px;border-radius:2px;background:#3a9ccc;"></div>
<span style="left:1733.50px;top:203.69px;font-size:11px;color:#fff;letter-spacing:-0.686px;">WEB</span>
<span style="left:1765.50px;top:204.00px;font-size:13px;font-weight:bold;color:#3a4c86;letter-spacing:1.942px;">1</span>
<div style="left:1786px;top:207px;width:28px;height:13px;border-radius:2px;background:#1c9a50;"></div>
<span style="left:1788.50px;top:203.69px;font-size:11px;color:#fff;letter-spacing:0.329px;">APP</span>
<span style="left:1820.50px;top:204.00px;font-size:13px;font-weight:bold;color:#3a4c86;letter-spacing:1.942px;">1</span>
<span style="left:1862.60px;top:204.50px;font-size:13px;color:#111;letter-spacing:1.010px;">588 B / 112 B</span>
<div style="left:2px;top:228px;width:2017px;height:26px;background:#e7eff9"></div>
<div style="left:40px;top:228px;width:2px;height:26px;background:#f1f5fb"></div>
<div style="left:57px;top:228px;width:2px;height:26px;background:#f1f5fb"></div>
<div style="left:146px;top:228px;width:2px;height:26px;background:#f1f5fb"></div>
<div style="left:290px;top:228px;width:2px;height:26px;background:#f1f5fb"></div>
<div style="left:655.5px;top:228px;width:2px;height:26px;background:#f1f5fb"></div>
<div style="left:696px;top:228px;width:2px;height:26px;background:#f1f5fb"></div>
<div style="left:1092px;top:228px;width:2px;height:26px;background:#f1f5fb"></div>
<div style="left:1180px;top:228px;width:2px;height:26px;background:#f1f5fb"></div>
<div style="left:1248px;top:228px;width:2px;height:26px;background:#f1f5fb"></div>
<div style="left:1460.6px;top:228px;width:2px;height:26px;background:#f1f5fb"></div>
<div style="left:1596px;top:228px;width:2px;height:26px;background:#f1f5fb"></div>
<div style="left:1723.5px;top:228px;width:2px;height:26px;background:#f1f5fb"></div>
<div style="left:1853.5px;top:228px;width:2px;height:26px;background:#f1f5fb"></div>
<span style="left:9.30px;top:230.50px;font-size:13px;color:#111;letter-spacing:0.974px;">134</span>
<div style="left:65.3px;top:232px;width:61.439600000000006px;height:15px;background:#f4f40c"></div>
<span style="left:66.30px;top:230.50px;font-size:13px;color:#111;letter-spacing:1.292px;">13:02:24</span>
<div style="left:155px;top:232px;width:59.6821px;height:15px;background:#f4f40c"></div>
<div style="left:219.5387px;top:232px;width:9.7044px;height:15px;background:#f4f40c"></div>
<span style="left:156.00px;top:230.50px;font-size:13px;color:#111;letter-spacing:0.949px;">unknown</span>
<span style="left:214.68px;top:230.50px;font-size:13px;color:#555;letter-spacing:1.527px;">-</span>
<span style="left:220.54px;top:230.50px;font-size:13px;color:#111;letter-spacing:0.974px;">0</span>
<svg style="left:295px;top:233px" width="16" height="17" viewBox="0 0 16 17"><rect x="0" y="0" width="16" height="16.5" rx="1" fill="#2e62a6"/><rect x="1.5" y="1.5" width="13" height="10" fill="#aee6fb"/><rect x="3.5" y="3.5" width="9" height="6" fill="none" stroke="#5aa2d8" stroke-width="1"/><rect x="1.5" y="13" width="13" height="2" fill="#9fe0fa"/></svg>
<span style="left:321.30px;top:230.50px;font-size:13px;color:#111;letter-spacing:1.020px;">rsmlap-010$ (10.180.10.61)</span>
<span style="left:704.00px;top:230.50px;font-size:13px;color:#111;letter-spacing:1.004px;">10.32.0.101</span>
<span style="left:1100.40px;top:230.50px;font-size:13px;color:#111;letter-spacing:-0.109px;">SNMP</span>
<span style="left:1189.70px;top:230.50px;font-size:13px;color:#111;letter-spacing:0.834px;">deny</span>
<svg style="left:1258px;top:231px" width="17" height="18" viewBox="0 0 17 18"><g fill="#e0e0e4"><circle cx="8.5" cy="9" r="6.5"/><rect x="6.8" y="0.8" width="3.4" height="4" transform="rotate(0 8.5 9)"/><rect x="6.8" y="0.8" width="3.4" height="4" transform="rotate(45 8.5 9)"/><rect x="6.8" y="0.8" width="3.4" height="4" transform="rotate(90 8.5 9)"/><rect x="6.8" y="0.8" width="3.4" height="4" transform="rotate(135 8.5 9)"/><rect x="6.8" y="0.8" width="3.4" height="4" transform="rotate(180 8.5 9)"/><rect x="6.8" y="0.8" width="3.4" height="4" transform="rotate(225 8.5 9)"/><rect x="6.8" y="0.8" width="3.4" height="4" transform="rotate(270 8.5 9)"/><rect x="6.8" y="0.8" width="3.4" height="4" transform="rotate(315 8.5 9)"/></g><circle cx="8.5" cy="9" r="3" fill="#ededf0"/></svg>
<span style="left:1279.00px;top:229.50px;font-size:13px;color:#111;letter-spacing:-0.109px;">SNMP</span>
<span style="left:1862.60px;top:230.50px;font-size:13px;color:#111;letter-spacing:0.896px;">41.76 KB / 0 B</span>
<div style="left:2px;top:254px;width:2017px;height:26px;background:linear-gradient(#fff 75%,#f4f4f6)"></div>
<span style="left:9.30px;top:256.50px;font-size:13px;color:#111;letter-spacing:0.974px;">135</span>
<div style="left:65.3px;top:258px;width:61.439600000000006px;height:15px;background:#f4f40c"></div>
<span style="left:66.30px;top:256.50px;font-size:13px;color:#111;letter-spacing:1.292px;">13:01:59</span>
<div style="left:155px;top:258px;width:59.6821px;height:15px;background:#f4f40c"></div>
<div style="left:219.5387px;top:258px;width:9.7044px;height:15px;background:#f4f40c"></div>
<span style="left:156.00px;top:256.50px;font-size:13px;color:#111;letter-spacing:0.949px;">unknown</span>
<span style="left:214.68px;top:256.50px;font-size:13px;color:#555;letter-spacing:1.527px;">-</span>
<span style="left:220.54px;top:256.50px;font-size:13px;color:#111;letter-spacing:0.974px;">0</span>
<svg style="left:295px;top:259px" width="16" height="17" viewBox="0 0 16 17"><rect x="0" y="0" width="16" height="16.5" rx="1" fill="#2e62a6"/><rect x="1.5" y="1.5" width="13" height="10" fill="#aee6fb"/><rect x="3.5" y="3.5" width="9" height="6" fill="none" stroke="#5aa2d8" stroke-width="1"/><rect x="1.5" y="13" width="13" height="2" fill="#9fe0fa"/></svg>
<span style="left:321.30px;top:256.50px;font-size:13px;color:#111;letter-spacing:0.821px;">octavio.castillo Celular (10.180.5.26)</span>
<svg style="left:704px;top:258px" width="19" height="13" viewBox="0 0 19 13"><rect width="19" height="13" fill="#f6c8c8"/><rect y="1" width="19" height="1.3" fill="#c95a5a"/><rect y="3.5" width="19" height="1.3" fill="#c95a5a"/><rect y="6" width="19" height="1.3" fill="#c95a5a"/><rect y="8.5" width="19" height="1.3" fill="#c95a5a"/><rect y="10.5" width="19" height="1.3" fill="#c95a5a"/><rect x="0" y="0" width="11" height="8" fill="#5a86d8"/><rect x="2" y="2" width="7" height="4" fill="#76a8f2"/><rect x="0" y="0" width="1.2" height="13" fill="#6b6072"/><rect y="11.8" width="19" height="1.2" fill="#6a5a5a"/><rect width="19" height="0.8" fill="#9a8a9a"/></svg>
<span style="left:728.50px;top:256.50px;font-size:13px;color:#111;letter-spacing:0.978px;">173.252.88.225 (mqtt-z.facebook.com)</span>
<span style="left:1100.40px;top:256.50px;font-size:13px;color:#111;letter-spacing:-0.086px;">HTTPS</span>
<span style="left:1189.70px;top:256.50px;font-size:13px;color:#111;letter-spacing:0.834px;">deny</span>
<svg style="left:1258px;top:258px" width="17" height="17" viewBox="0 0 17 17"><rect x="0.5" y="0.5" width="16" height="16" rx="1" fill="#3a5c98" stroke="#223866"/><rect x="1" y="10" width="15" height="6" fill="#5478aa"/><path d="M9.6 16.5 V9.3 H7.6 V7.2 H9.6 V5.6 C9.6 3.6 10.6 2.7 12.4 2.7 H13.8 V4.7 H12.8 C12.1 4.7 11.9 5.1 11.9 5.7 V7.2 H13.8 L13.5 9.3 H11.9 V16.5 Z" fill="#eef8ff"/></svg>
<span style="left:1279.00px;top:255.32px;font-size:13.5px;font-weight:bold;color:#2a4b78;letter-spacing:0.691px;-webkit-text-stroke:0.35px currentColor;">Facebook</span>
<svg style="left:1510px;top:262px" width="39" height="10" viewBox="0 0 39 10"><defs><linearGradient id="ry3" x1="0" y1="0" x2="0" y2="1"><stop offset="0" stop-color="#fff6a0"/><stop offset="0.6" stop-color="#e8b800"/><stop offset="1" stop-color="#fff6a0"/></linearGradient><linearGradient id="rg" x1="0" y1="0" x2="0" y2="1"><stop offset="0" stop-color="#f6f6f8"/><stop offset="0.6" stop-color="#c9cac4"/><stop offset="1" stop-color="#eeeeee"/></linearGradient></defs><rect x="0" y="0" width="39" height="10" fill="url(#rg)"/><rect x="1" y="1" width="23.4" height="8" fill="url(#ry3)"/><rect x="8.8" y="2" width="0.8" height="6" fill="rgba(255,255,255,.45)"/><rect x="16.1" y="2" width="0.8" height="6" fill="rgba(255,255,255,.45)"/><rect x="23.4" y="2" width="0.8" height="6" fill="rgba(255,255,255,.45)"/><rect x="30.7" y="2" width="0.8" height="6" fill="rgba(255,255,255,.45)"/><rect x="0" y="0" width="39" height="1" fill="#8a8676"/><rect x="0" y="9" width="39" height="1" fill="#8a8676"/><rect x="0" y="0" width="1.5" height="10" fill="#6e5e48"/><rect x="38" y="0" width="1" height="10" fill="#6a6a6a"/></svg>
<svg style="left:1626px;top:260px" width="15" height="15" viewBox="0 0 15 15"><circle cx="7.5" cy="7.5" r="6.3" fill="none" stroke="#d9304a" stroke-width="2.4"/><path d="M3.4 11.6 L11.6 3.4" stroke="#d9304a" stroke-width="2.4"/></svg>
<span style="left:1646.00px;top:256.50px;font-size:13px;color:#111;letter-spacing:0.578px;">Blocked</span>
<div style="left:1731px;top:259px;width:28px;height:13px;border-radius:2px;background:#3a9ccc;"></div>
<span style="left:1733.50px;top:255.69px;font-size:11px;color:#fff;letter-spacing:-0.686px;">WEB</span>
<span style="left:1765.50px;top:256.00px;font-size:13px;font-weight:bold;color:#3a4c86;letter-spacing:1.942px;">1</span>
<div style="left:1786px;top:259px;width:28px;height:13px;border-radius:2px;background:#1c9a50;"></div>
<span style="left:1788.50px;top:255.69px;font-size:11px;color:#fff;letter-spacing:0.329px;">APP</span>
<span style="left:1820.50px;top:256.00px;font-size:13px;font-weight:bold;color:#3a4c86;letter-spacing:1.942px;">1</span>
<span style="left:1862.60px;top:256.50px;font-size:13px;color:#111;letter-spacing:1.010px;">556 B / 112 B</span>
<div style="left:2px;top:280px;width:2017px;height:26px;background:#e7eff9"></div>
<div style="left:40px;top:280px;width:2px;height:26px;background:#f1f5fb"></div>
<div style="left:57px;top:280px;width:2px;height:26px;background:#f1f5fb"></div>
<div style="left:146px;top:280px;width:2px;height:26px;background:#f1f5fb"></div>
<div style="left:290px;top:280px;width:2px;height:26px;background:#f1f5fb"></div>
<div style="left:655.5px;top:280px;width:2px;height:26px;background:#f1f5fb"></div>
<div style="left:696px;top:280px;width:2px;height:26px;background:#f1f5fb"></div>
<div style="left:1092px;top:280px;width:2px;height:26px;background:#f1f5fb"></div>
<div style="left:1180px;top:280px;width:2px;height:26px;background:#f1f5fb"></div>
<div style="left:1248px;top:280px;width:2px;height:26px;background:#f1f5fb"></div>
<div style="left:1460.6px;top:280px;width:2px;height:26px;background:#f1f5fb"></div>
<div style="left:1596px;top:280px;width:2px;height:26px;background:#f1f5fb"></div>
<div style="left:1723.5px;top:280px;width:2px;height:26px;background:#f1f5fb"></div>
<div style="left:1853.5px;top:280px;width:2px;height:26px;background:#f1f5fb"></div>
<span style="left:9.30px;top:282.50px;font-size:13px;color:#111;letter-spacing:0.974px;">136</span>
<div style="left:65.3px;top:284px;width:61.439600000000006px;height:15px;background:#f4f40c"></div>
<span style="left:66.30px;top:282.50px;font-size:13px;color:#111;letter-spacing:1.292px;">13:01:44</span>
<div style="left:155px;top:284px;width:59.6821px;height:15px;background:#f4f40c"></div>
<div style="left:219.5387px;top:284px;width:9.7044px;height:15px;background:#f4f40c"></div>
<span style="left:156.00px;top:282.50px;font-size:13px;color:#111;letter-spacing:0.949px;">unknown</span>
<span style="left:214.68px;top:282.50px;font-size:13px;color:#555;letter-spacing:1.527px;">-</span>
<span style="left:220.54px;top:282.50px;font-size:13px;color:#111;letter-spacing:0.974px;">0</span>
<svg style="left:295px;top:285px" width="16" height="17" viewBox="0 0 16 17"><rect x="0" y="0" width="16" height="16.5" rx="1" fill="#2e62a6"/><rect x="1.5" y="1.5" width="13" height="10" fill="#aee6fb"/><rect x="3.5" y="3.5" width="9" height="6" fill="none" stroke="#5aa2d8" stroke-width="1"/><rect x="1.5" y="13" width="13" height="2" fill="#9fe0fa"/></svg>
<span style="left:321.30px;top:282.50px;font-size:13px;color:#111;letter-spacing:0.797px;">RSMPC-007$ (10.180.10.35)</span>
<span style="left:704.00px;top:282.50px;font-size:13px;color:#111;letter-spacing:1.007px;">10.180.7.2</span>
<span style="left:1100.40px;top:282.50px;font-size:13px;color:#111;letter-spacing:-0.074px;">DCE-RPC</span>
<span style="left:1189.70px;top:282.50px;font-size:13px;color:#111;letter-spacing:0.429px;">close</span>
<svg style="left:1258px;top:283px" width="17" height="18" viewBox="0 0 17 18"><g fill="#e0e0e4"><circle cx="8.5" cy="9" r="6.5"/><rect x="6.8" y="0.8" width="3.4" height="4" transform="rotate(0 8.5 9)"/><rect x="6.8" y="0.8" width="3.4" height="4" transform="rotate(45 8.5 9)"/><rect x="6.8" y="0.8" width="3.4" height="4" transform="rotate(90 8.5 9)"/><rect x="6.8" y="0.8" width="3.4" height="4" transform="rotate(135 8.5 9)"/><rect x="6.8" y="0.8" width="3.4" height="4" transform="rotate(180 8.5 9)"/><rect x="6.8" y="0.8" width="3.4" height="4" transform="rotate(225 8.5 9)"/><rect x="6.8" y="0.8" width="3.4" height="4" transform="rotate(270 8.5 9)"/><rect x="6.8" y="0.8" width="3.4" height="4" transform="rotate(315 8.5 9)"/></g><circle cx="8.5" cy="9" r="3" fill="#ededf0"/></svg>
<span style="left:1279.00px;top:281.50px;font-size:13px;color:#111;letter-spacing:-0.074px;">DCE-RPC</span>
<span style="left:1862.60px;top:282.50px;font-size:13px;color:#111;letter-spacing:0.936px;">760 B / 728 B</span>
<div style="left:2px;top:306px;width:2017px;height:26px;background:linear-gradient(#fff 75%,#f4f4f6)"></div>
<span style="left:9.30px;top:308.50px;font-size:13px;color:#111;letter-spacing:0.974px;">137</span>
<div style="left:65.3px;top:310px;width:61.439600000000006px;height:15px;background:#f4f40c"></div>
<span style="left:66.30px;top:308.50px;font-size:13px;color:#111;letter-spacing:1.292px;">13:01:39</span>
<div style="left:155px;top:310px;width:59.6821px;height:15px;background:#f4f40c"></div>
<div style="left:219.5387px;top:310px;width:9.7044px;height:15px;background:#f4f40c"></div>
<span style="left:156.00px;top:308.50px;font-size:13px;color:#111;letter-spacing:0.949px;">unknown</span>
<span style="left:214.68px;top:308.50px;font-size:13px;color:#555;letter-spacing:1.527px;">-</span>
<span style="left:220.54px;top:308.50px;font-size:13px;color:#111;letter-spacing:0.974px;">0</span>
<svg style="left:295px;top:311px" width="16" height="17" viewBox="0 0 16 17"><rect x="0" y="0" width="16" height="16.5" rx="1" fill="#2e62a6"/><rect x="1.5" y="1.5" width="13" height="10" fill="#aee6fb"/><rect x="3.5" y="3.5" width="9" height="6" fill="none" stroke="#5aa2d8" stroke-width="1"/><rect x="1.5" y="13" width="13" height="2" fill="#9fe0fa"/></svg>
<span style="left:321.30px;top:308.50px;font-size:13px;color:#111;letter-spacing:0.875px;">monica.yam Laptop WiFi (10.180.10.39)</span>
<span style="left:704.00px;top:308.50px;font-size:13px;color:#111;letter-spacing:1.007px;">10.180.7.2</span>
<span style="left:1100.40px;top:308.50px;font-size:13px;color:#111;letter-spacing:-0.074px;">DCE-RPC</span>
<span style="left:1189.70px;top:308.50px;font-size:13px;color:#111;letter-spacing:0.429px;">close</span>
<svg style="left:1258px;top:309px" width="17" height="18" viewBox="0 0 17 18"><g fill="#e0e0e4"><circle cx="8.5" cy="9" r="6.5"/><rect x="6.8" y="0.8" width="3.4" height="4" transform="rotate(0 8.5 9)"/><rect x="6.8" y="0.8" width="3.4" height="4" transform="rotate(45 8.5 9)"/><rect x="6.8" y="0.8" width="3.4" height="4" transform="rotate(90 8.5 9)"/><rect x="6.8" y="0.8" width="3.4" height="4" transform="rotate(135 8.5 9)"/><rect x="6.8" y="0.8" width="3.4" height="4" transform="rotate(180 8.5 9)"/><rect x="6.8" y="0.8" width="3.4" height="4" transform="rotate(225 8.5 9)"/><rect x="6.8" y="0.8" width="3.4" height="4" transform="rotate(270 8.5 9)"/><rect x="6.8" y="0.8" width="3.4" height="4" transform="rotate(315 8.5 9)"/></g><circle cx="8.5" cy="9" r="3" fill="#ededf0"/></svg>
<span style="left:1279.00px;top:307.50px;font-size:13px;color:#111;letter-spacing:-0.074px;">DCE-RPC</span>
<span style="left:1862.60px;top:308.50px;font-size:13px;color:#111;letter-spacing:0.875px;">1.03 KB / 1.08 KB</span>
<div style="left:2px;top:332px;width:2017px;height:26px;background:#e7eff9"></div>
<div style="left:40px;top:332px;width:2px;height:26px;background:#f1f5fb"></div>
<div style="left:57px;top:332px;width:2px;height:26px;background:#f1f5fb"></div>
<div style="left:146px;top:332px;width:2px;height:26px;background:#f1f5fb"></div>
<div style="left:290px;top:332px;width:2px;height:26px;background:#f1f5fb"></div>
<div style="left:655.5px;top:332px;width:2px;height:26px;background:#f1f5fb"></div>
<div style="left:696px;top:332px;width:2px;height:26px;background:#f1f5fb"></div>
<div style="left:1092px;top:332px;width:2px;height:26px;background:#f1f5fb"></div>
<div style="left:1180px;top:332px;width:2px;height:26px;background:#f1f5fb"></div>
<div style="left:1248px;top:332px;width:2px;height:26px;background:#f1f5fb"></div>
<div style="left:1460.6px;top:332px;width:2px;height:26px;background:#f1f5fb"></div>
<div style="left:1596px;top:332px;width:2px;height:26px;background:#f1f5fb"></div>
<div style="left:1723.5px;top:332px;width:2px;height:26px;background:#f1f5fb"></div>
<div style="left:1853.5px;top:332px;width:2px;height:26px;background:#f1f5fb"></div>
<span style="left:9.30px;top:334.50px;font-size:13px;color:#111;letter-spacing:0.974px;">138</span>
<div style="left:65.3px;top:336px;width:61.439600000000006px;height:15px;background:#f4f40c"></div>
<span style="left:66.30px;top:334.50px;font-size:13px;color:#111;letter-spacing:1.292px;">13:01:19</span>
<div style="left:155px;top:336px;width:59.6821px;height:15px;background:#f4f40c"></div>
<div style="left:219.5387px;top:336px;width:9.7044px;height:15px;background:#f4f40c"></div>
<span style="left:156.00px;top:334.50px;font-size:13px;color:#111;letter-spacing:0.949px;">unknown</span>
<span style="left:214.68px;top:334.50px;font-size:13px;color:#555;letter-spacing:1.527px;">-</span>
<span style="left:220.54px;top:334.50px;font-size:13px;color:#111;letter-spacing:0.974px;">0</span>
<svg style="left:295px;top:337px" width="16" height="16" viewBox="0 0 16 16"><rect x="0.5" y="0.5" width="15" height="15" fill="#2c8a3c"/><rect x="2" y="2" width="12" height="4" fill="#c8e8b8"/><rect x="3" y="8" width="10" height="6" fill="#e9f7e2"/><rect x="6" y="8" width="1.5" height="6" fill="#2c8a3c"/><rect x="3" y="10.5" width="10" height="1.5" fill="#2c8a3c"/><rect x="4" y="3" width="2" height="2" fill="#2c8a3c"/><rect x="9" y="3" width="2" height="2" fill="#2c8a3c"/></svg>
<span style="left:321.30px;top:334.50px;font-size:13px;color:#111;letter-spacing:0.806px;">rina.mendez Cel Personal (10.180.13.103)</span>
<span style="left:704.00px;top:334.50px;font-size:13px;color:#111;letter-spacing:1.007px;">10.180.7.2</span>
<span style="left:1100.40px;top:334.50px;font-size:13px;color:#111;letter-spacing:0.323px;">DNS</span>
<span style="left:1189.70px;top:334.50px;font-size:13px;color:#111;letter-spacing:0.617px;">accept</span>
<svg style="left:1258px;top:335px" width="17" height="18" viewBox="0 0 17 18"><g fill="#e0e0e4"><circle cx="8.5" cy="9" r="6.5"/><rect x="6.8" y="0.8" width="3.4" height="4" transform="rotate(0 8.5 9)"/><rect x="6.8" y="0.8" width="3.4" height="4" transform="rotate(45 8.5 9)"/><rect x="6.8" y="0.8" width="3.4" height="4" transform="rotate(90 8.5 9)"/><rect x="6.8" y="0.8" width="3.4" height="4" transform="rotate(135 8.5 9)"/><rect x="6.8" y="0.8" width="3.4" height="4" transform="rotate(180 8.5 9)"/><rect x="6.8" y="0.8" width="3.4" height="4" transform="rotate(225 8.5 9)"/><rect x="6.8" y="0.8" width="3.4" height="4" transform="rotate(270 8.5 9)"/><rect x="6.8" y="0.8" width="3.4" height="4" transform="rotate(315 8.5 9)"/></g><circle cx="8.5" cy="9" r="3" fill="#ededf0"/></svg>
<span style="left:1279.00px;top:333.50px;font-size:13px;color:#111;letter-spacing:0.323px;">DNS</span>
<span style="left:1862.60px;top:334.50px;font-size:13px;color:#111;letter-spacing:0.932px;">60 B / 140 B</span>
<div style="left:2px;top:358px;width:2017px;height:26px;background:linear-gradient(#fff 75%,#f4f4f6)"></div>
<span style="left:9.30px;top:360.50px;font-size:13px;color:#111;letter-spacing:0.974px;">139</span>
<div style="left:65.3px;top:362px;width:61.439600000000006px;height:15px;background:#f4f40c"></div>
<span style="left:66.30px;top:360.50px;font-size:13px;color:#111;letter-spacing:1.292px;">13:01:19</span>
<div style="left:155px;top:362px;width:59.6821px;height:15px;background:#f4f40c"></div>
<div style="left:219.5387px;top:362px;width:9.7044px;height:15px;background:#f4f40c"></div>
<span style="left:156.00px;top:360.50px;font-size:13px;color:#111;letter-spacing:0.949px;">unknown</span>
<span style="left:214.68px;top:360.50px;font-size:13px;color:#555;letter-spacing:1.527px;">-</span>
<span style="left:220.54px;top:360.50px;font-size:13px;color:#111;letter-spacing:0.974px;">0</span>
<svg style="left:295px;top:363px" width="16" height="17" viewBox="0 0 16 17"><rect x="0" y="0" width="16" height="16.5" rx="1" fill="#2e62a6"/><rect x="1.5" y="1.5" width="13" height="10" fill="#aee6fb"/><rect x="3.5" y="3.5" width="9" height="6" fill="none" stroke="#5aa2d8" stroke-width="1"/><rect x="1.5" y="13" width="13" height="2" fill="#9fe0fa"/></svg>
<span style="left:321.30px;top:360.50px;font-size:13px;color:#111;letter-spacing:0.803px;">jesus.lopez Laptop WiFi (10.180.10.23)</span>
<span style="left:704.00px;top:360.50px;font-size:13px;color:#111;letter-spacing:1.007px;">10.180.7.2</span>
<span style="left:1100.40px;top:360.50px;font-size:13px;color:#111;letter-spacing:-0.074px;">DCE-RPC</span>
<span style="left:1189.70px;top:360.50px;font-size:13px;color:#111;letter-spacing:0.429px;">close</span>
<svg style="left:1258px;top:361px" width="17" height="18" viewBox="0 0 17 18"><g fill="#e0e0e4"><circle cx="8.5" cy="9" r="6.5"/><rect x="6.8" y="0.8" width="3.4" height="4" transform="rotate(0 8.5 9)"/><rect x="6.8" y="0.8" width="3.4" height="4" transform="rotate(45 8.5 9)"/><rect x="6.8" y="0.8" width="3.4" height="4" transform="rotate(90 8.5 9)"/><rect x="6.8" y="0.8" width="3.4" height="4" transform="rotate(135 8.5 9)"/><rect x="6.8" y="0.8" width="3.4" height="4" transform="rotate(180 8.5 9)"/><rect x="6.8" y="0.8" width="3.4" height="4" transform="rotate(225 8.5 9)"/><rect x="6.8" y="0.8" width="3.4" height="4" transform="rotate(270 8.5 9)"/><rect x="6.8" y="0.8" width="3.4" height="4" transform="rotate(315 8.5 9)"/></g><circle cx="8.5" cy="9" r="3" fill="#ededf0"/></svg>
<span style="left:1279.00px;top:359.50px;font-size:13px;color:#111;letter-spacing:-0.074px;">DCE-RPC</span>
<span style="left:1862.60px;top:360.50px;font-size:13px;color:#111;letter-spacing:0.936px;">620 B / 492 B</span>
<div style="left:2px;top:384px;width:2017px;height:26px;background:#e7eff9"></div>
<div style="left:40px;top:384px;width:2px;height:26px;background:#f1f5fb"></div>
<div style="left:57px;top:384px;width:2px;height:26px;background:#f1f5fb"></div>
<div style="left:146px;top:384px;width:2px;height:26px;background:#f1f5fb"></div>
<div style="left:290px;top:384px;width:2px;height:26px;background:#f1f5fb"></div>
<div style="left:655.5px;top:384px;width:2px;height:26px;background:#f1f5fb"></div>
<div style="left:696px;top:384px;width:2px;height:26px;background:#f1f5fb"></div>
<div style="left:1092px;top:384px;width:2px;height:26px;background:#f1f5fb"></div>
<div style="left:1180px;top:384px;width:2px;height:26px;background:#f1f5fb"></div>
<div style="left:1248px;top:384px;width:2px;height:26px;background:#f1f5fb"></div>
<div style="left:1460.6px;top:384px;width:2px;height:26px;background:#f1f5fb"></div>
<div style="left:1596px;top:384px;width:2px;height:26px;background:#f1f5fb"></div>
<div style="left:1723.5px;top:384px;width:2px;height:26px;background:#f1f5fb"></div>
<div style="left:1853.5px;top:384px;width:2px;height:26px;background:#f1f5fb"></div>
<span style="left:9.30px;top:386.50px;font-size:13px;color:#111;letter-spacing:0.974px;">140</span>
<div style="left:65.3px;top:388px;width:61.439600000000006px;height:15px;background:#f4f40c"></div>
<span style="left:66.30px;top:386.50px;font-size:13px;color:#111;letter-spacing:1.292px;">13:01:18</span>
<div style="left:155px;top:388px;width:59.6821px;height:15px;background:#f4f40c"></div>
<div style="left:219.5387px;top:388px;width:9.7044px;height:15px;background:#f4f40c"></div>
<span style="left:156.00px;top:386.50px;font-size:13px;color:#111;letter-spacing:0.949px;">unknown</span>
<span style="left:214.68px;top:386.50px;font-size:13px;color:#555;letter-spacing:1.527px;">-</span>
<span style="left:220.54px;top:386.50px;font-size:13px;color:#111;letter-spacing:0.974px;">0</span>
<svg style="left:295px;top:389px" width="16" height="17" viewBox="0 0 16 17"><rect x="0" y="0" width="16" height="16.5" rx="1" fill="#2e62a6"/><rect x="1.5" y="1.5" width="13" height="10" fill="#aee6fb"/><rect x="3.5" y="3.5" width="9" height="6" fill="none" stroke="#5aa2d8" stroke-width="1"/><rect x="1.5" y="13" width="13" height="2" fill="#9fe0fa"/></svg>
<span style="left:321.30px;top:386.50px;font-size:13px;color:#111;letter-spacing:0.771px;">laureano.ernandez Cel Personal (10.180.13.17)</span>
<span style="left:704.00px;top:386.50px;font-size:13px;color:#111;letter-spacing:1.007px;">10.180.7.2</span>
<span style="left:1100.40px;top:386.50px;font-size:13px;color:#111;letter-spacing:0.323px;">DNS</span>
<span style="left:1189.70px;top:386.50px;font-size:13px;color:#111;letter-spacing:0.617px;">accept</span>
<svg style="left:1258px;top:387px" width="17" height="18" viewBox="0 0 17 18"><g fill="#e0e0e4"><circle cx="8.5" cy="9" r="6.5"/><rect x="6.8" y="0.8" width="3.4" height="4" transform="rotate(0 8.5 9)"/><rect x="6.8" y="0.8" width="3.4" height="4" transform="rotate(45 8.5 9)"/><rect x="6.8" y="0.8" width="3.4" height="4" transform="rotate(90 8.5 9)"/><rect x="6.8" y="0.8" width="3.4" height="4" transform="rotate(135 8.5 9)"/><rect x="6.8" y="0.8" width="3.4" height="4" transform="rotate(180 8.5 9)"/><rect x="6.8" y="0.8" width="3.4" height="4" transform="rotate(225 8.5 9)"/><rect x="6.8" y="0.8" width="3.4" height="4" transform="rotate(270 8.5 9)"/><rect x="6.8" y="0.8" width="3.4" height="4" transform="rotate(315 8.5 9)"/></g><circle cx="8.5" cy="9" r="3" fill="#ededf0"/></svg>
<span style="left:1279.00px;top:385.50px;font-size:13px;color:#111;letter-spacing:0.323px;">DNS</span>
<span style="left:1862.60px;top:386.50px;font-size:13px;color:#111;letter-spacing:0.932px;">62 B / 190 B</span>
<div style="left:2px;top:410px;width:2017px;height:26px;background:linear-gradient(#fff 75%,#f4f4f6)"></div>
<span style="left:9.30px;top:412.50px;font-size:13px;color:#111;letter-spacing:0.974px;">141</span>
<div style="left:65.3px;top:414px;width:61.439600000000006px;height:15px;background:#f4f40c"></div>
<span style="left:66.30px;top:412.50px;font-size:13px;color:#111;letter-spacing:1.292px;">13:01:18</span>
<div style="left:155px;top:414px;width:59.6821px;height:15px;background:#f4f40c"></div>
<div style="left:219.5387px;top:414px;width:9.7044px;height:15px;background:#f4f40c"></div>
<span style="left:156.00px;top:412.50px;font-size:13px;color:#111;letter-spacing:0.949px;">unknown</span>
<span style="left:214.68px;top:412.50px;font-size:13px;color:#555;letter-spacing:1.527px;">-</span>
<span style="left:220.54px;top:412.50px;font-size:13px;color:#111;letter-spacing:0.974px;">0</span>
<svg style="left:295px;top:415px" width="16" height="17" viewBox="0 0 16 17"><rect x="0" y="0" width="16" height="16.5" rx="1" fill="#2e62a6"/><rect x="1.5" y="1.5" width="13" height="10" fill="#aee6fb"/><rect x="3.5" y="3.5" width="9" height="6" fill="none" stroke="#5aa2d8" stroke-width="1"/><rect x="1.5" y="13" width="13" height="2" fill="#9fe0fa"/></svg>
<span style="left:321.30px;top:412.50px;font-size:13px;color:#111;letter-spacing:0.771px;">laureano.ernandez Cel Personal (10.180.13.17)</span>
<span style="left:704.00px;top:412.50px;font-size:13px;color:#111;letter-spacing:1.007px;">10.180.7.2</span>
<span style="left:1100.40px;top:412.50px;font-size:13px;color:#111;letter-spacing:0.323px;">DNS</span>
<span style="left:1189.70px;top:412.50px;font-size:13px;color:#111;letter-spacing:0.617px;">accept</span>
<svg style="left:1258px;top:413px" width="17" height="18" viewBox="0 0 17 18"><g fill="#e0e0e4"><circle cx="8.5" cy="9" r="6.5"/><rect x="6.8" y="0.8" width="3.4" height="4" transform="rotate(0 8.5 9)"/><rect x="6.8" y="0.8" width="3.4" height="4" transform="rotate(45 8.5 9)"/><rect x="6.8" y="0.8" width="3.4" height="4" transform="rotate(90 8.5 9)"/><rect x="6.8" y="0.8" width="3.4" height="4" transform="rotate(135 8.5 9)"/><rect x="6.8" y="0.8" width="3.4" height="4" transform="rotate(180 8.5 9)"/><rect x="6.8" y="0.8" width="3.4" height="4" transform="rotate(225 8.5 9)"/><rect x="6.8" y="0.8" width="3.4" height="4" transform="rotate(270 8.5 9)"/><rect x="6.8" y="0.8" width="3.4" height="4" transform="rotate(315 8.5 9)"/></g><circle cx="8.5" cy="9" r="3" fill="#ededf0"/></svg>
<span style="left:1279.00px;top:411.50px;font-size:13px;color:#111;letter-spacing:0.323px;">DNS</span>
<span style="left:1862.60px;top:412.50px;font-size:13px;color:#111;letter-spacing:0.932px;">68 B / 108 B</span>
<div style="left:2px;top:436px;width:2017px;height:26px;background:#e7eff9"></div>
<div style="left:40px;top:436px;width:2px;height:26px;background:#f1f5fb"></div>
<div style="left:57px;top:436px;width:2px;height:26px;background:#f1f5fb"></div>
<div style="left:146px;top:436px;width:2px;height:26px;background:#f1f5fb"></div>
<div style="left:290px;top:436px;width:2px;height:26px;background:#f1f5fb"></div>
<div style="left:655.5px;top:436px;width:2px;height:26px;background:#f1f5fb"></div>
<div style="left:696px;top:436px;width:2px;height:26px;background:#f1f5fb"></div>
<div style="left:1092px;top:436px;width:2px;height:26px;background:#f1f5fb"></div>
<div style="left:1180px;top:436px;width:2px;height:26px;background:#f1f5fb"></div>
<div style="left:1248px;top:436px;width:2px;height:26px;background:#f1f5fb"></div>
<div style="left:1460.6px;top:436px;width:2px;height:26px;background:#f1f5fb"></div>
<div style="left:1596px;top:436px;width:2px;height:26px;background:#f1f5fb"></div>
<div style="left:1723.5px;top:436px;width:2px;height:26px;background:#f1f5fb"></div>
<div style="left:1853.5px;top:436px;width:2px;height:26px;background:#f1f5fb"></div>
<span style="left:9.30px;top:438.50px;font-size:13px;color:#111;letter-spacing:0.974px;">142</span>
<div style="left:65.3px;top:440px;width:61.439600000000006px;height:15px;background:#f4f40c"></div>
<span style="left:66.30px;top:438.50px;font-size:13px;color:#111;letter-spacing:1.292px;">13:01:18</span>
<div style="left:155px;top:440px;width:59.6821px;height:15px;background:#f4f40c"></div>
<div style="left:219.5387px;top:440px;width:9.7044px;height:15px;background:#f4f40c"></div>
<span style="left:156.00px;top:438.50px;font-size:13px;color:#111;letter-spacing:0.949px;">unknown</span>
<span style="left:214.68px;top:438.50px;font-size:13px;color:#555;letter-spacing:1.527px;">-</span>
<span style="left:220.54px;top:438.50px;font-size:13px;color:#111;letter-spacing:0.974px;">0</span>
<svg style="left:295px;top:441px" width="16" height="17" viewBox="0 0 16 17"><rect x="0" y="0" width="16" height="16.5" rx="1" fill="#2e62a6"/><rect x="1.5" y="1.5" width="13" height="10" fill="#aee6fb"/><rect x="3.5" y="3.5" width="9" height="6" fill="none" stroke="#5aa2d8" stroke-width="1"/><rect x="1.5" y="13" width="13" height="2" fill="#9fe0fa"/></svg>
<span style="left:321.30px;top:438.50px;font-size:13px;color:#111;letter-spacing:0.817px;">audrey.perez Cel Personal (10.180.13.123)</span>
<span style="left:704.00px;top:438.50px;font-size:13px;color:#111;letter-spacing:1.007px;">10.180.7.2</span>
<span style="left:1100.40px;top:438.50px;font-size:13px;color:#111;letter-spacing:0.323px;">DNS</span>
<span style="left:1189.70px;top:438.50px;font-size:13px;color:#111;letter-spacing:0.617px;">accept</span>
<svg style="left:1258px;top:439px" width="17" height="18" viewBox="0 0 17 18"><g fill="#e0e0e4"><circle cx="8.5" cy="9" r="6.5"/><rect x="6.8" y="0.8" width="3.4" height="4" transform="rotate(0 8.5 9)"/><rect x="6.8" y="0.8" width="3.4" height="4" transform="rotate(45 8.5 9)"/><rect x="6.8" y="0.8" width="3.4" height="4" transform="rotate(90 8.5 9)"/><rect x="6.8" y="0.8" width="3.4" height="4" transform="rotate(135 8.5 9)"/><rect x="6.8" y="0.8" width="3.4" height="4" transform="rotate(180 8.5 9)"/><rect x="6.8" y="0.8" width="3.4" height="4" transform="rotate(225 8.5 9)"/><rect x="6.8" y="0.8" width="3.4" height="4" transform="rotate(270 8.5 9)"/><rect x="6.8" y="0.8" width="3.4" height="4" transform="rotate(315 8.5 9)"/></g><circle cx="8.5" cy="9" r="3" fill="#ededf0"/></svg>
<span style="left:1279.00px;top:437.50px;font-size:13px;color:#111;letter-spacing:0.323px;">DNS</span>
<span style="left:1862.60px;top:438.50px;font-size:13px;color:#111;letter-spacing:0.932px;">98 B / 135 B</span>
<div style="left:2px;top:463px;width:2017px;height:24px;background:#363636;border-top:1px solid #151515;box-sizing:border-box"></div>
<div style="left:40px;top:463px;width:2px;height:24px;background:#fff"></div>
<div style="left:57px;top:463px;width:2px;height:24px;background:#fff"></div>
<div style="left:146px;top:463px;width:2px;height:24px;background:#fff"></div>
<div style="left:290px;top:463px;width:2px;height:24px;background:#fff"></div>
<div style="left:655.5px;top:463px;width:2px;height:24px;background:#fff"></div>
<div style="left:696px;top:463px;width:2px;height:24px;background:#fff"></div>
<div style="left:1092px;top:463px;width:2px;height:24px;background:#fff"></div>
<div style="left:1180px;top:463px;width:2px;height:24px;background:#fff"></div>
<div style="left:1248px;top:463px;width:2px;height:24px;background:#fff"></div>
<div style="left:1460.6px;top:463px;width:2px;height:24px;background:#fff"></div>
<div style="left:1596px;top:463px;width:2px;height:24px;background:#fff"></div>
<div style="left:1723.5px;top:463px;width:2px;height:24px;background:#fff"></div>
<div style="left:1853.5px;top:463px;width:2px;height:24px;background:#fff"></div>
<span style="left:9.30px;top:464.50px;font-size:13px;color:#fff;letter-spacing:0.974px;">143</span>
<div style="left:5px;top:469px;width:5px;height:11px;background:#9a9a9a"></div>
<div style="left:65.3px;top:466px;width:61.439600000000006px;height:15px;background:#b0930f"></div>
<span style="left:66.30px;top:464.50px;font-size:13px;color:#f4ef9a;letter-spacing:1.292px;">13:01:18</span>
<div style="left:155px;top:466px;width:59.6821px;height:15px;background:#b0930f"></div>
<div style="left:219.5387px;top:466px;width:9.7044px;height:15px;background:#b0930f"></div>
<span style="left:156.00px;top:464.50px;font-size:13px;color:#f4ef9a;letter-spacing:0.949px;">unknown</span>
<span style="left:214.68px;top:464.50px;font-size:13px;color:#fff;letter-spacing:1.527px;">-</span>
<span style="left:220.54px;top:464.50px;font-size:13px;color:#f4ef9a;letter-spacing:0.974px;">0</span>
<svg style="left:295px;top:467px" width="16" height="17" viewBox="0 0 16 17"><rect x="0" y="0" width="16" height="16.5" rx="1" fill="#2e62a6"/><rect x="1.5" y="1.5" width="13" height="10" fill="#aee6fb"/><rect x="3.5" y="3.5" width="9" height="6" fill="none" stroke="#5aa2d8" stroke-width="1"/><rect x="1.5" y="13" width="13" height="2" fill="#9fe0fa"/></svg>
<span style="left:321.30px;top:464.50px;font-size:13px;color:#fff;letter-spacing:0.772px;">oscar.reyes Laptop Dell Presicion (10.180.12.5)</span>
<svg style="left:704px;top:466px" width="19" height="13" viewBox="0 0 19 13"><rect width="19" height="13" fill="#f6c8c8"/><rect y="1" width="19" height="1.3" fill="#c95a5a"/><rect y="3.5" width="19" height="1.3" fill="#c95a5a"/><rect y="6" width="19" height="1.3" fill="#c95a5a"/><rect y="8.5" width="19" height="1.3" fill="#c95a5a"/><rect y="10.5" width="19" height="1.3" fill="#c95a5a"/><rect x="0" y="0" width="11" height="8" fill="#5a86d8"/><rect x="2" y="2" width="7" height="4" fill="#76a8f2"/><rect x="0" y="0" width="1.2" height="13" fill="#6b6072"/><rect y="11.8" width="19" height="1.2" fill="#6a5a5a"/><rect width="19" height="0.8" fill="#9a8a9a"/></svg>
<span style="left:728.50px;top:464.50px;font-size:13px;color:#fff;letter-spacing:1.017px;">65.55.232.120 (dr.skype.net)</span>
<span style="left:1100.40px;top:464.50px;font-size:13px;color:#fff;letter-spacing:1.074px;">udp/50001</span>
<span style="left:1189.70px;top:464.50px;font-size:13px;color:#fff;letter-spacing:0.617px;">accept</span>
<svg style="left:1256px;top:465px" width="18" height="18" viewBox="0 0 18 18"><g fill="#e8e8e8"><circle cx="9" cy="9" r="6.2"/><rect x="7.6" y="0.8" width="2.8" height="4" transform="rotate(0 9 9)"/><rect x="7.6" y="0.8" width="2.8" height="4" transform="rotate(45 9 9)"/><rect x="7.6" y="0.8" width="2.8" height="4" transform="rotate(90 9 9)"/><rect x="7.6" y="0.8" width="2.8" height="4" transform="rotate(135 9 9)"/><rect x="7.6" y="0.8" width="2.8" height="4" transform="rotate(180 9 9)"/><rect x="7.6" y="0.8" width="2.8" height="4" transform="rotate(225 9 9)"/><rect x="7.6" y="0.8" width="2.8" height="4" transform="rotate(270 9 9)"/><rect x="7.6" y="0.8" width="2.8" height="4" transform="rotate(315 9 9)"/></g><circle cx="9" cy="9" r="3.6" fill="#333"/><circle cx="9" cy="9" r="2" fill="#ddd"/></svg>
<span style="left:1279.00px;top:464.50px;font-size:13px;color:#fff;letter-spacing:0.759px;">UDP/50001</span>
<span style="left:1862.60px;top:464.50px;font-size:13px;color:#fff;letter-spacing:0.890px;">238.56 KB / 24.29 KB</span>
<div style="left:2px;top:488px;width:2017px;height:26px;background:#e7eff9"></div>
<div style="left:40px;top:488px;width:2px;height:26px;background:#f1f5fb"></div>
<div style="left:57px;top:488px;width:2px;height:26px;background:#f1f5fb"></div>
<div style="left:146px;top:488px;width:2px;height:26px;background:#f1f5fb"></div>
<div style="left:290px;top:488px;width:2px;height:26px;background:#f1f5fb"></div>
<div style="left:655.5px;top:488px;width:2px;height:26px;background:#f1f5fb"></div>
<div style="left:696px;top:488px;width:2px;height:26px;background:#f1f5fb"></div>
<div style="left:1092px;top:488px;width:2px;height:26px;background:#f1f5fb"></div>
<div style="left:1180px;top:488px;width:2px;height:26px;background:#f1f5fb"></div>
<div style="left:1248px;top:488px;width:2px;height:26px;background:#f1f5fb"></div>
<div style="left:1460.6px;top:488px;width:2px;height:26px;background:#f1f5fb"></div>
<div style="left:1596px;top:488px;width:2px;height:26px;background:#f1f5fb"></div>
<div style="left:1723.5px;top:488px;width:2px;height:26px;background:#f1f5fb"></div>
<div style="left:1853.5px;top:488px;width:2px;height:26px;background:#f1f5fb"></div>
<span style="left:9.30px;top:490.50px;font-size:13px;color:#111;letter-spacing:0.974px;">144</span>
<div style="left:65.3px;top:492px;width:61.439600000000006px;height:15px;background:#f4f40c"></div>
<span style="left:66.30px;top:490.50px;font-size:13px;color:#111;letter-spacing:1.292px;">13:01:17</span>
<div style="left:155px;top:492px;width:59.6821px;height:15px;background:#f4f40c"></div>
<div style="left:219.5387px;top:492px;width:9.7044px;height:15px;background:#f4f40c"></div>
<span style="left:156.00px;top:490.50px;font-size:13px;color:#111;letter-spacing:0.949px;">unknown</span>
<span style="left:214.68px;top:490.50px;font-size:13px;color:#555;letter-spacing:1.527px;">-</span>
<span style="left:220.54px;top:490.50px;font-size:13px;color:#111;letter-spacing:0.974px;">0</span>
<svg style="left:295px;top:493px" width="16" height="17" viewBox="0 0 16 17"><rect x="0" y="0" width="16" height="16.5" rx="1" fill="#2e62a6"/><rect x="1.5" y="1.5" width="13" height="10" fill="#aee6fb"/><rect x="3.5" y="3.5" width="9" height="6" fill="none" stroke="#5aa2d8" stroke-width="1"/><rect x="1.5" y="13" width="13" height="2" fill="#9fe0fa"/></svg>
<span style="left:321.30px;top:490.50px;font-size:13px;color:#111;letter-spacing:0.782px;">jesus.morales Cel Personal (10.180.13.63)</span>
<svg style="left:704px;top:492px" width="19" height="13" viewBox="0 0 19 13"><rect width="19" height="13" fill="#f6c8c8"/><rect y="1" width="19" height="1.3" fill="#c95a5a"/><rect y="3.5" width="19" height="1.3" fill="#c95a5a"/><rect y="6" width="19" height="1.3" fill="#c95a5a"/><rect y="8.5" width="19" height="1.3" fill="#c95a5a"/><rect y="10.5" width="19" height="1.3" fill="#c95a5a"/><rect x="0" y="0" width="11" height="8" fill="#5a86d8"/><rect x="2" y="2" width="7" height="4" fill="#76a8f2"/><rect x="0" y="0" width="1.2" height="13" fill="#6b6072"/><rect y="11.8" width="19" height="1.2" fill="#6a5a5a"/><rect width="19" height="0.8" fill="#9a8a9a"/></svg>
<span style="left:728.50px;top:490.50px;font-size:13px;color:#111;letter-spacing:1.000px;">157.56.174.33</span>
<span style="left:1100.40px;top:490.50px;font-size:13px;color:#111;letter-spacing:-0.086px;">HTTPS</span>
<span style="left:1189.70px;top:490.50px;font-size:13px;color:#111;letter-spacing:1.043px;">timeout</span>
<svg style="left:1258px;top:491px" width="17" height="18" viewBox="0 0 17 18"><g fill="#e0e0e4"><circle cx="8.5" cy="9" r="6.5"/><rect x="6.8" y="0.8" width="3.4" height="4" transform="rotate(0 8.5 9)"/><rect x="6.8" y="0.8" width="3.4" height="4" transform="rotate(45 8.5 9)"/><rect x="6.8" y="0.8" width="3.4" height="4" transform="rotate(90 8.5 9)"/><rect x="6.8" y="0.8" width="3.4" height="4" transform="rotate(135 8.5 9)"/><rect x="6.8" y="0.8" width="3.4" height="4" transform="rotate(180 8.5 9)"/><rect x="6.8" y="0.8" width="3.4" height="4" transform="rotate(225 8.5 9)"/><rect x="6.8" y="0.8" width="3.4" height="4" transform="rotate(270 8.5 9)"/><rect x="6.8" y="0.8" width="3.4" height="4" transform="rotate(315 8.5 9)"/></g><circle cx="8.5" cy="9" r="3" fill="#ededf0"/></svg>
<span style="left:1279.00px;top:489.50px;font-size:13px;color:#111;letter-spacing:-0.086px;">HTTPS</span>
<span style="left:1862.60px;top:490.50px;font-size:13px;color:#111;letter-spacing:0.901px;">1.84 KB / 450 B</span>
<div style="left:2px;top:514px;width:2017px;height:26px;background:linear-gradient(#fff 75%,#f4f4f6)"></div>
<span style="left:9.30px;top:516.50px;font-size:13px;color:#111;letter-spacing:0.974px;">145</span>
<div style="left:65.3px;top:518px;width:61.439600000000006px;height:15px;background:#f4f40c"></div>
<span style="left:66.30px;top:516.50px;font-size:13px;color:#111;letter-spacing:1.292px;">13:01:17</span>
<div style="left:155px;top:518px;width:59.6821px;height:15px;background:#f4f40c"></div>
<div style="left:219.5387px;top:518px;width:9.7044px;height:15px;background:#f4f40c"></div>
<span style="left:156.00px;top:516.50px;font-size:13px;color:#111;letter-spacing:0.949px;">unknown</span>
<span style="left:214.68px;top:516.50px;font-size:13px;color:#555;letter-spacing:1.527px;">-</span>
<span style="left:220.54px;top:516.50px;font-size:13px;color:#111;letter-spacing:0.974px;">0</span>
<svg style="left:295px;top:519px" width="16" height="17" viewBox="0 0 16 17"><rect x="0" y="0" width="16" height="16.5" rx="1" fill="#2e62a6"/><rect x="1.5" y="1.5" width="13" height="10" fill="#aee6fb"/><rect x="3.5" y="3.5" width="9" height="6" fill="none" stroke="#5aa2d8" stroke-width="1"/><rect x="1.5" y="13" width="13" height="2" fill="#9fe0fa"/></svg>
<span style="left:321.30px;top:516.50px;font-size:13px;color:#111;letter-spacing:0.845px;">mauricio.mendez Laptop WiFi (10.180.10.29)</span>
<span style="left:704.00px;top:516.50px;font-size:13px;color:#111;letter-spacing:1.007px;">10.180.7.2</span>
<span style="left:1100.40px;top:516.50px;font-size:13px;color:#111;letter-spacing:0.323px;">DNS</span>
<span style="left:1189.70px;top:516.50px;font-size:13px;color:#111;letter-spacing:0.617px;">accept</span>
<svg style="left:1258px;top:517px" width="17" height="18" viewBox="0 0 17 18"><g fill="#e0e0e4"><circle cx="8.5" cy="9" r="6.5"/><rect x="6.8" y="0.8" width="3.4" height="4" transform="rotate(0 8.5 9)"/><rect x="6.8" y="0.8" width="3.4" height="4" transform="rotate(45 8.5 9)"/><rect x="6.8" y="0.8" width="3.4" height="4" transform="rotate(90 8.5 9)"/><rect x="6.8" y="0.8" width="3.4" height="4" transform="rotate(135 8.5 9)"/><rect x="6.8" y="0.8" width="3.4" height="4" transform="rotate(180 8.5 9)"/><rect x="6.8" y="0.8" width="3.4" height="4" transform="rotate(225 8.5 9)"/><rect x="6.8" y="0.8" width="3.4" height="4" transform="rotate(270 8.5 9)"/><rect x="6.8" y="0.8" width="3.4" height="4" transform="rotate(315 8.5 9)"/></g><circle cx="8.5" cy="9" r="3" fill="#ededf0"/></svg>
<span style="left:1279.00px;top:515.50px;font-size:13px;color:#111;letter-spacing:0.323px;">DNS</span>
<span style="left:1862.60px;top:516.50px;font-size:13px;color:#111;letter-spacing:0.932px;">71 B / 133 B</span>
<div style="left:2px;top:540px;width:2017px;height:26px;background:#e7eff9"></div>
<div style="left:40px;top:540px;width:2px;height:26px;background:#f1f5fb"></div>
<div style="left:57px;top:540px;width:2px;height:26px;background:#f1f5fb"></div>
<div style="left:146px;top:540px;width:2px;height:26px;background:#f1f5fb"></div>
<div style="left:290px;top:540px;width:2px;height:26px;background:#f1f5fb"></div>
<div style="left:655.5px;top:540px;width:2px;height:26px;background:#f1f5fb"></div>
<div style="left:696px;top:540px;width:2px;height:26px;background:#f1f5fb"></div>
<div style="left:1092px;top:540px;width:2px;height:26px;background:#f1f5fb"></div>
<div style="left:1180px;top:540px;width:2px;height:26px;background:#f1f5fb"></div>
<div style="left:1248px;top:540px;width:2px;height:26px;background:#f1f5fb"></div>
<div style="left:1460.6px;top:540px;width:2px;height:26px;background:#f1f5fb"></div>
<div style="left:1596px;top:540px;width:2px;height:26px;background:#f1f5fb"></div>
<div style="left:1723.5px;top:540px;width:2px;height:26px;background:#f1f5fb"></div>
<div style="left:1853.5px;top:540px;width:2px;height:26px;background:#f1f5fb"></div>
<span style="left:9.30px;top:542.50px;font-size:13px;color:#111;letter-spacing:0.974px;">146</span>
<div style="left:65.3px;top:544px;width:61.439600000000006px;height:15px;background:#f4f40c"></div>
<span style="left:66.30px;top:542.50px;font-size:13px;color:#111;letter-spacing:1.292px;">13:01:17</span>
<div style="left:155px;top:544px;width:59.6821px;height:15px;background:#f4f40c"></div>
<div style="left:219.5387px;top:544px;width:9.7044px;height:15px;background:#f4f40c"></div>
<span style="left:156.00px;top:542.50px;font-size:13px;color:#111;letter-spacing:0.949px;">unknown</span>
<span style="left:214.68px;top:542.50px;font-size:13px;color:#555;letter-spacing:1.527px;">-</span>
<span style="left:220.54px;top:542.50px;font-size:13px;color:#111;letter-spacing:0.974px;">0</span>
<svg style="left:295px;top:545px" width="16" height="17" viewBox="0 0 16 17"><rect x="0" y="0" width="16" height="16.5" rx="1" fill="#2e62a6"/><rect x="1.5" y="1.5" width="13" height="10" fill="#aee6fb"/><rect x="3.5" y="3.5" width="9" height="6" fill="none" stroke="#5aa2d8" stroke-width="1"/><rect x="1.5" y="13" width="13" height="2" fill="#9fe0fa"/></svg>
<span style="left:321.30px;top:542.50px;font-size:13px;color:#111;letter-spacing:0.818px;">carlos.pablo Celular (10.180.5.17)</span>
<span style="left:704.00px;top:542.50px;font-size:13px;color:#111;letter-spacing:1.007px;">10.180.7.2</span>
<span style="left:1100.40px;top:542.50px;font-size:13px;color:#111;letter-spacing:0.323px;">DNS</span>
<span style="left:1189.70px;top:542.50px;font-size:13px;color:#111;letter-spacing:0.617px;">accept</span>
<svg style="left:1258px;top:543px" width="17" height="18" viewBox="0 0 17 18"><g fill="#e0e0e4"><circle cx="8.5" cy="9" r="6.5"/><rect x="6.8" y="0.8" width="3.4" height="4" transform="rotate(0 8.5 9)"/><rect x="6.8" y="0.8" width="3.4" height="4" transform="rotate(45 8.5 9)"/><rect x="6.8" y="0.8" width="3.4" height="4" transform="rotate(90 8.5 9)"/><rect x="6.8" y="0.8" width="3.4" height="4" transform="rotate(135 8.5 9)"/><rect x="6.8" y="0.8" width="3.4" height="4" transform="rotate(180 8.5 9)"/><rect x="6.8" y="0.8" width="3.4" height="4" transform="rotate(225 8.5 9)"/><rect x="6.8" y="0.8" width="3.4" height="4" transform="rotate(270 8.5 9)"/><rect x="6.8" y="0.8" width="3.4" height="4" transform="rotate(315 8.5 9)"/></g><circle cx="8.5" cy="9" r="3" fill="#ededf0"/></svg>
<span style="left:1279.00px;top:541.50px;font-size:13px;color:#111;letter-spacing:0.323px;">DNS</span>
<span style="left:1862.60px;top:542.50px;font-size:13px;color:#111;letter-spacing:0.932px;">74 B / 122 B</span>
<div style="left:2px;top:566px;width:2017px;height:26px;background:linear-gradient(#fff 75%,#f4f4f6)"></div>
<span style="left:9.30px;top:568.50px;font-size:13px;color:#111;letter-spacing:0.974px;">147</span>
<div style="left:65.3px;top:570px;width:61.439600000000006px;height:15px;background:#f4f40c"></div>
<span style="left:66.30px;top:568.50px;font-size:13px;color:#111;letter-spacing:1.292px;">13:01:17</span>
<div style="left:155px;top:570px;width:59.6821px;height:15px;background:#f4f40c"></div>
<div style="left:219.5387px;top:570px;width:9.7044px;height:15px;background:#f4f40c"></div>
<span style="left:156.00px;top:568.50px;font-size:13px;color:#111;letter-spacing:0.949px;">unknown</span>
<span style="left:214.68px;top:568.50px;font-size:13px;color:#555;letter-spacing:1.527px;">-</span>
<span style="left:220.54px;top:568.50px;font-size:13px;color:#111;letter-spacing:0.974px;">0</span>
<svg style="left:295px;top:571px" width="16" height="16" viewBox="0 0 16 16"><rect x="0.5" y="0.5" width="15" height="15" fill="#2c8a3c"/><rect x="2" y="2" width="12" height="4" fill="#c8e8b8"/><rect x="3" y="8" width="10" height="6" fill="#e9f7e2"/><rect x="6" y="8" width="1.5" height="6" fill="#2c8a3c"/><rect x="3" y="10.5" width="10" height="1.5" fill="#2c8a3c"/><rect x="4" y="3" width="2" height="2" fill="#2c8a3c"/><rect x="9" y="3" width="2" height="2" fill="#2c8a3c"/></svg>
<span style="left:321.30px;top:568.50px;font-size:13px;color:#111;letter-spacing:0.806px;">rina.mendez Cel Personal (10.180.13.103)</span>
<span style="left:704.00px;top:568.50px;font-size:13px;color:#111;letter-spacing:1.007px;">10.180.7.2</span>
<span style="left:1100.40px;top:568.50px;font-size:13px;color:#111;letter-spacing:0.323px;">DNS</span>
<span style="left:1189.70px;top:568.50px;font-size:13px;color:#111;letter-spacing:0.617px;">accept</span>
<svg style="left:1258px;top:569px" width="17" height="18" viewBox="0 0 17 18"><g fill="#e0e0e4"><circle cx="8.5" cy="9" r="6.5"/><rect x="6.8" y="0.8" width="3.4" height="4" transform="rotate(0 8.5 9)"/><rect x="6.8" y="0.8" width="3.4" height="4" transform="rotate(45 8.5 9)"/><rect x="6.8" y="0.8" width="3.4" height="4" transform="rotate(90 8.5 9)"/><rect x="6.8" y="0.8" width="3.4" height="4" transform="rotate(135 8.5 9)"/><rect x="6.8" y="0.8" width="3.4" height="4" transform="rotate(180 8.5 9)"/><rect x="6.8" y="0.8" width="3.4" height="4" transform="rotate(225 8.5 9)"/><rect x="6.8" y="0.8" width="3.4" height="4" transform="rotate(270 8.5 9)"/><rect x="6.8" y="0.8" width="3.4" height="4" transform="rotate(315 8.5 9)"/></g><circle cx="8.5" cy="9" r="3" fill="#ededf0"/></svg>
<span style="left:1279.00px;top:567.50px;font-size:13px;color:#111;letter-spacing:0.323px;">DNS</span>
<span style="left:1862.60px;top:568.50px;font-size:13px;color:#111;letter-spacing:0.932px;">61 B / 189 B</span>
<div style="left:2px;top:592px;width:2017px;height:26px;background:#e7eff9"></div>
<div style="left:40px;top:592px;width:2px;height:26px;background:#f1f5fb"></div>
<div style="left:57px;top:592px;width:2px;height:26px;background:#f1f5fb"></div>
<div style="left:146px;top:592px;width:2px;height:26px;background:#f1f5fb"></div>
<div style="left:290px;top:592px;width:2px;height:26px;background:#f1f5fb"></div>
<div style="left:655.5px;top:592px;width:2px;height:26px;background:#f1f5fb"></div>
<div style="left:696px;top:592px;width:2px;height:26px;background:#f1f5fb"></div>
<div style="left:1092px;top:592px;width:2px;height:26px;background:#f1f5fb"></div>
<div style="left:1180px;top:592px;width:2px;height:26px;background:#f1f5fb"></div>
<div style="left:1248px;top:592px;width:2px;height:26px;background:#f1f5fb"></div>
<div style="left:1460.6px;top:592px;width:2px;height:26px;background:#f1f5fb"></div>
<div style="left:1596px;top:592px;width:2px;height:26px;background:#f1f5fb"></div>
<div style="left:1723.5px;top:592px;width:2px;height:26px;background:#f1f5fb"></div>
<div style="left:1853.5px;top:592px;width:2px;height:26px;background:#f1f5fb"></div>
<span style="left:9.30px;top:594.50px;font-size:13px;color:#111;letter-spacing:0.974px;">148</span>
<div style="left:65.3px;top:596px;width:61.439600000000006px;height:15px;background:#f4f40c"></div>
<span style="left:66.30px;top:594.50px;font-size:13px;color:#111;letter-spacing:1.292px;">13:01:17</span>
<div style="left:155px;top:596px;width:59.6821px;height:15px;background:#f4f40c"></div>
<div style="left:219.5387px;top:596px;width:9.7044px;height:15px;background:#f4f40c"></div>
<span style="left:156.00px;top:594.50px;font-size:13px;color:#111;letter-spacing:0.949px;">unknown</span>
<span style="left:214.68px;top:594.50px;font-size:13px;color:#555;letter-spacing:1.527px;">-</span>
<span style="left:220.54px;top:594.50px;font-size:13px;color:#111;letter-spacing:0.974px;">0</span>
<svg style="left:295px;top:597px" width="16" height="17" viewBox="0 0 16 17"><rect x="0" y="0" width="16" height="16.5" rx="1" fill="#2e62a6"/><rect x="1.5" y="1.5" width="13" height="10" fill="#aee6fb"/><rect x="3.5" y="3.5" width="9" height="6" fill="none" stroke="#5aa2d8" stroke-width="1"/><rect x="1.5" y="13" width="13" height="2" fill="#9fe0fa"/></svg>
<span style="left:321.30px;top:594.50px;font-size:13px;color:#111;letter-spacing:0.790px;">isvi.urgel Cel Personal (10.180.13.80)</span>
<span style="left:704.00px;top:594.50px;font-size:13px;color:#111;letter-spacing:1.007px;">10.180.7.2</span>
<span style="left:1100.40px;top:594.50px;font-size:13px;color:#111;letter-spacing:0.323px;">DNS</span>
<span style="left:1189.70px;top:594.50px;font-size:13px;color:#111;letter-spacing:0.617px;">accept</span>
<svg style="left:1258px;top:595px" width="17" height="18" viewBox="0 0 17 18"><g fill="#e0e0e4"><circle cx="8.5" cy="9" r="6.5"/><rect x="6.8" y="0.8" width="3.4" height="4" transform="rotate(0 8.5 9)"/><rect x="6.8" y="0.8" width="3.4" height="4" transform="rotate(45 8.5 9)"/><rect x="6.8" y="0.8" width="3.4" height="4" transform="rotate(90 8.5 9)"/><rect x="6.8" y="0.8" width="3.4" height="4" transform="rotate(135 8.5 9)"/><rect x="6.8" y="0.8" width="3.4" height="4" transform="rotate(180 8.5 9)"/><rect x="6.8" y="0.8" width="3.4" height="4" transform="rotate(225 8.5 9)"/><rect x="6.8" y="0.8" width="3.4" height="4" transform="rotate(270 8.5 9)"/><rect x="6.8" y="0.8" width="3.4" height="4" transform="rotate(315 8.5 9)"/></g><circle cx="8.5" cy="9" r="3" fill="#ededf0"/></svg>
<span style="left:1279.00px;top:593.50px;font-size:13px;color:#111;letter-spacing:0.323px;">DNS</span>
<span style="left:1862.60px;top:594.50px;font-size:13px;color:#111;letter-spacing:0.932px;">68 B / 100 B</span>
<div style="left:2px;top:618px;width:2017px;height:26px;background:linear-gradient(#fff 75%,#f4f4f6)"></div>
<span style="left:9.30px;top:620.50px;font-size:13px;color:#111;letter-spacing:0.974px;">149</span>
<div style="left:65.3px;top:622px;width:61.439600000000006px;height:15px;background:#f4f40c"></div>
<span style="left:66.30px;top:620.50px;font-size:13px;color:#111;letter-spacing:1.292px;">13:01:17</span>
<div style="left:155px;top:622px;width:59.6821px;height:15px;background:#f4f40c"></div>
<div style="left:219.5387px;top:622px;width:9.7044px;height:15px;background:#f4f40c"></div>
<span style="left:156.00px;top:620.50px;font-size:13px;color:#111;letter-spacing:0.949px;">unknown</span>
<span style="left:214.68px;top:620.50px;font-size:13px;color:#555;letter-spacing:1.527px;">-</span>
<span style="left:220.54px;top:620.50px;font-size:13px;color:#111;letter-spacing:0.974px;">0</span>
<svg style="left:295px;top:623px" width="16" height="17" viewBox="0 0 16 17"><rect x="0" y="0" width="16" height="16.5" rx="1" fill="#2e62a6"/><rect x="1.5" y="1.5" width="13" height="10" fill="#aee6fb"/><rect x="3.5" y="3.5" width="9" height="6" fill="none" stroke="#5aa2d8" stroke-width="1"/><rect x="1.5" y="13" width="13" height="2" fill="#9fe0fa"/></svg>
<span style="left:321.30px;top:620.50px;font-size:13px;color:#111;letter-spacing:0.911px;">hector.sarmiento Celular (192.168.102.213)</span>
<span style="left:704.00px;top:620.50px;font-size:13px;color:#111;letter-spacing:1.007px;">10.180.7.2</span>
<span style="left:1100.40px;top:620.50px;font-size:13px;color:#111;letter-spacing:0.323px;">DNS</span>
<span style="left:1189.70px;top:620.50px;font-size:13px;color:#111;letter-spacing:0.617px;">accept</span>
<svg style="left:1258px;top:621px" width="17" height="18" viewBox="0 0 17 18"><g fill="#e0e0e4"><circle cx="8.5" cy="9" r="6.5"/><rect x="6.8" y="0.8" width="3.4" height="4" transform="rotate(0 8.5 9)"/><rect x="6.8" y="0.8" width="3.4" height="4" transform="rotate(45 8.5 9)"/><rect x="6.8" y="0.8" width="3.4" height="4" transform="rotate(90 8.5 9)"/><rect x="6.8" y="0.8" width="3.4" height="4" transform="rotate(135 8.5 9)"/><rect x="6.8" y="0.8" width="3.4" height="4" transform="rotate(180 8.5 9)"/><rect x="6.8" y="0.8" width="3.4" height="4" transform="rotate(225 8.5 9)"/><rect x="6.8" y="0.8" width="3.4" height="4" transform="rotate(270 8.5 9)"/><rect x="6.8" y="0.8" width="3.4" height="4" transform="rotate(315 8.5 9)"/></g><circle cx="8.5" cy="9" r="3" fill="#ededf0"/></svg>
<span style="left:1279.00px;top:619.50px;font-size:13px;color:#111;letter-spacing:0.323px;">DNS</span>
<span style="left:1862.60px;top:620.50px;font-size:13px;color:#111;letter-spacing:0.932px;">65 B / 265 B</span>
<div style="left:2px;top:644px;width:2017px;height:26px;background:linear-gradient(#f3f1fa,#fff 3px)"></div>
<div style="left:65.3px;top:648px;width:61.439600000000006px;height:15px;background:#f4f40c"></div>
<div style="left:155px;top:648px;width:59.6821px;height:15px;background:#f4f40c"></div>
<div style="left:219.5387px;top:648px;width:9.7044px;height:15px;background:#f4f40c"></div>
<svg style="left:295px;top:649px" width="16" height="17" viewBox="0 0 16 17"><rect x="0" y="0" width="16" height="16.5" rx="1" fill="#2e62a6"/><rect x="1.5" y="1.5" width="13" height="10" fill="#aee6fb"/><rect x="3.5" y="3.5" width="9" height="6" fill="none" stroke="#5aa2d8" stroke-width="1"/><rect x="1.5" y="13" width="13" height="2" fill="#9fe0fa"/></svg>
</div>
<div style="left:5px;top:41px;width:2022px;height:1px;background:#6c717e"></div>
<div style="left:5px;top:42px;width:2022px;height:1px;background:#fafafa"></div>
<div style="left:5px;top:43px;width:3px;height:24px;background:#d8d8d8"></div>
<div style="left:8px;top:43px;width:2017px;height:24px;background:linear-gradient(#4f5566,#5d6377 15%,#5b6176 80%,#5d5a6a)"></div>
<div style="left:5px;top:67px;width:2022px;height:1px;background:#f2f2f8"></div>
<div style="left:5px;top:68px;width:2022px;height:1px;background:#8a8592"></div>
<div style="left:46px;top:43px;width:1px;height:24px;background:#3e4350"></div>
<div style="left:47px;top:43px;width:1px;height:24px;background:#d8dae2"></div>
<div style="left:64px;top:43px;width:1px;height:24px;background:#3e4350"></div>
<div style="left:65px;top:43px;width:1px;height:24px;background:#d8dae2"></div>
<div style="left:154px;top:43px;width:1px;height:24px;background:#3e4350"></div>
<div style="left:155px;top:43px;width:1px;height:24px;background:#d8dae2"></div>
<div style="left:296px;top:43px;width:1px;height:24px;background:#3e4350"></div>
<div style="left:297px;top:43px;width:1px;height:24px;background:#d8dae2"></div>
<div style="left:664px;top:43px;width:1px;height:24px;background:#3e4350"></div>
<div style="left:665px;top:43px;width:1px;height:24px;background:#d8dae2"></div>
<div style="left:704px;top:43px;width:1px;height:24px;background:#3e4350"></div>
<div style="left:705px;top:43px;width:1px;height:24px;background:#d8dae2"></div>
<div style="left:1101.5px;top:43px;width:1px;height:24px;background:#3e4350"></div>
<div style="left:1102.5px;top:43px;width:1px;height:24px;background:#d8dae2"></div>
<div style="left:1191.7px;top:43px;width:1px;height:24px;background:#3e4350"></div>
<div style="left:1192.7px;top:43px;width:1px;height:24px;background:#d8dae2"></div>
<div style="left:1258.5px;top:43px;width:1px;height:24px;background:#3e4350"></div>
<div style="left:1259.5px;top:43px;width:1px;height:24px;background:#d8dae2"></div>
<div style="left:1471.5px;top:43px;width:1px;height:24px;background:#3e4350"></div>
<div style="left:1472.5px;top:43px;width:1px;height:24px;background:#d8dae2"></div>
<div style="left:1606px;top:43px;width:1px;height:24px;background:#3e4350"></div>
<div style="left:1607px;top:43px;width:1px;height:24px;background:#d8dae2"></div>
<div style="left:1733.6px;top:43px;width:1px;height:24px;background:#3e4350"></div>
<div style="left:1734.6px;top:43px;width:1px;height:24px;background:#d8dae2"></div>
<div style="left:1865.3px;top:43px;width:1px;height:24px;background:#3e4350"></div>
<div style="left:1866.3px;top:43px;width:1px;height:24px;background:#d8dae2"></div>
<div style="left:1999.5px;top:43px;width:1px;height:24px;background:#3e4350"></div>
<div style="left:2000.5px;top:43px;width:1px;height:24px;background:#d8dae2"></div>
<span style="left:21.43px;top:44.78px;font-size:14.5px;font-weight:bold;color:#fff;letter-spacing:4.084px;-webkit-text-stroke:0.5px currentColor;">#</span>
<span style="left:49.30px;top:44.78px;font-size:14.5px;font-weight:bold;color:#fff;letter-spacing:-0.739px;-webkit-text-stroke:0.5px currentColor;">@</span>
<span style="left:68.00px;top:44.78px;font-size:14.5px;font-weight:bold;color:#fff;letter-spacing:1.677px;-webkit-text-stroke:0.5px currentColor;">Date/Time</span>
<span style="left:161.05px;top:44.78px;font-size:14.5px;font-weight:bold;color:#fff;letter-spacing:1.079px;-webkit-text-stroke:0.5px currentColor;">Source Interface</span>
<span style="left:454.19px;top:44.78px;font-size:14.5px;font-weight:bold;color:#fff;letter-spacing:0.745px;-webkit-text-stroke:0.5px currentColor;">Source</span>
<span style="left:667.20px;top:44.78px;font-size:14.5px;font-weight:bold;color:#fff;letter-spacing:0.856px;-webkit-text-stroke:0.5px currentColor;">User</span>
<span style="left:858.84px;top:44.78px;font-size:14.5px;font-weight:bold;color:#fff;letter-spacing:0.988px;-webkit-text-stroke:0.5px currentColor;">Destination</span>
<span style="left:1119.00px;top:44.78px;font-size:14.5px;font-weight:bold;color:#fff;letter-spacing:0.800px;-webkit-text-stroke:0.5px currentColor;">Service</span>
<span style="left:1201.35px;top:44.78px;font-size:14.5px;font-weight:bold;color:#fff;letter-spacing:0.732px;-webkit-text-stroke:0.5px currentColor;">Action</span>
<span style="left:1297.26px;top:44.78px;font-size:14.5px;font-weight:bold;color:#fff;letter-spacing:0.938px;-webkit-text-stroke:0.5px currentColor;">Application Name</span>
<span style="left:1476.92px;top:44.78px;font-size:14.5px;font-weight:bold;color:#fff;letter-spacing:0.754px;-webkit-text-stroke:0.5px currentColor;">Application Risk</span>
<span style="left:1611.57px;top:44.78px;font-size:14.5px;font-weight:bold;color:#fff;letter-spacing:0.843px;-webkit-text-stroke:0.5px currentColor;">Security Action</span>
<span style="left:1739.85px;top:44.78px;font-size:14.5px;font-weight:bold;color:#fff;letter-spacing:0.827px;-webkit-text-stroke:0.5px currentColor;">Security Events</span>
<span style="left:1874.40px;top:44.78px;font-size:14.5px;font-weight:bold;color:#fff;letter-spacing:1.164px;-webkit-text-stroke:0.5px currentColor;">Sent / Received</span>
<div style="left:150px;top:43px;width:6px;height:24px;background:#5b6176"></div>
<svg style="left:2004px;top:46px" width="18" height="18" viewBox="0 0 18 18"><g fill="#f2f2f2"><circle cx="9" cy="9" r="6"/><rect x="7.5" y="0.5" width="3" height="4" transform="rotate(0 9 9)"/><rect x="7.5" y="0.5" width="3" height="4" transform="rotate(45 9 9)"/><rect x="7.5" y="0.5" width="3" height="4" transform="rotate(90 9 9)"/><rect x="7.5" y="0.5" width="3" height="4" transform="rotate(135 9 9)"/><rect x="7.5" y="0.5" width="3" height="4" transform="rotate(180 9 9)"/><rect x="7.5" y="0.5" width="3" height="4" transform="rotate(225 9 9)"/><rect x="7.5" y="0.5" width="3" height="4" transform="rotate(270 9 9)"/><rect x="7.5" y="0.5" width="3" height="4" transform="rotate(315 9 9)"/></g><circle cx="9" cy="9" r="2.6" fill="#5b6176"/></svg>
<div style="left:2026px;top:43px;width:1px;height:675px;background:#333"></div>
<div style="left:5px;top:718px;width:2022px;height:28px;background:#c9c9c9"></div>
<div style="left:5px;top:746px;width:2022px;height:3px;background:#d4d4d4"></div>
<div style="left:5px;top:749px;width:2022px;height:2px;background:#8a8a8a"></div>
<div style="left:5px;top:751px;width:2022px;height:5px;background:#dedede"></div>
<div style="left:5px;top:756px;width:2022px;height:1.5px;background:#7a7a7a"></div>
<svg style="left:856px;top:725px" width="18" height="20" viewBox="0 0 18 20"><rect x="0.5" y="0.5" width="17" height="19" rx="2" fill="#cfd6e0" stroke="#b4bccb"/><rect x="4" y="4" width="2" height="12" fill="#111"/><path d="M14 4 L7 10 L14 16 Z" fill="#111"/></svg>
<svg style="left:881px;top:725px" width="18" height="20" viewBox="0 0 18 20"><rect x="0.5" y="0.5" width="17" height="19" rx="2" fill="#cfd6e0" stroke="#b4bccb"/><path d="M12 4 L5.5 10 L12 16 Z" fill="#111"/></svg>
<svg style="left:1007px;top:725px" width="18" height="20" viewBox="0 0 18 20"><rect x="0.5" y="0.5" width="17" height="19" rx="2" fill="#cfd6e0" stroke="#b4bccb"/><path d="M6 4 L12.5 10 L6 16 Z" fill="#111"/></svg>
<svg style="left:1032px;top:725px" width="18" height="20" viewBox="0 0 18 20"><rect x="0.5" y="0.5" width="17" height="19" rx="2" fill="#cfd6e0" stroke="#b4bccb"/><path d="M4 4 L11 10 L4 16 Z" fill="#111"/><rect x="12" y="4" width="2" height="12" fill="#111"/></svg>
<div style="left:906px;top:723px;width:56px;height:22px;background:#fff"></div>
<span style="left:909.00px;top:726.15px;font-size:14px;color:#111;letter-spacing:1.054px;">3</span>
<span style="left:969.00px;top:725.46px;font-size:16px;color:#1a1a1a;letter-spacing:1.578px;-webkit-text-stroke:0.1px currentColor;">/ 32</span>
<span style="left:1062.00px;top:725.46px;font-size:16px;color:#1a1a1a;letter-spacing:1.348px;-webkit-text-stroke:0.1px currentColor;">[ Total: 1566 ]</span>
<div style="left:1978px;top:725px;width:49px;height:27px;background:#fff;border-left:1px solid #555;border-top:1px solid #999;border-top-left-radius:5px"></div>
<svg style="left:1995px;top:734px" width="14" height="10" viewBox="0 0 14 10"><path d="M1 1 L13 1 L7 9 Z" fill="#9a9a9a"/></svg>
<div style="left:5px;top:757.5px;width:2021px;height:465.5px;background:#fff"></div>
<div style="left:6px;top:767px;width:2020px;height:33px;background:#ebf1fb"></div>
<div style="left:310px;top:767px;width:2px;height:33px;background:#fbfbfd"></div>
<div style="left:1016px;top:767px;width:2px;height:33px;background:#fbfbfd"></div>
<div style="left:1317px;top:767px;width:2px;height:33px;background:#fbfbfd"></div>
<span style="left:10.40px;top:770.94px;font-size:12.3px;font-weight:bold;color:#111;letter-spacing:0.949px;-webkit-text-stroke:0.4px currentColor;">Device Type</span>
<span style="left:314.50px;top:770.94px;font-size:12.3px;color:#111;letter-spacing:0.629px;">Other Network Device</span>
<span style="left:1020.50px;top:770.94px;font-size:12.3px;font-weight:bold;color:#111;letter-spacing:1.035px;-webkit-text-stroke:0.4px currentColor;">Duration</span>
<span style="left:1323.00px;top:770.94px;font-size:12.3px;color:#111;letter-spacing:0.791px;">188</span>
<div style="left:6px;top:800px;width:2020px;height:33px;background:#ffffff"></div>
<div style="left:6px;top:800px;width:2020px;height:2px;background:#ebebed"></div>
<div style="left:310px;top:800px;width:2px;height:33px;background:#fbfbfd"></div>
<div style="left:1016px;top:800px;width:2px;height:33px;background:#fbfbfd"></div>
<div style="left:1317px;top:800px;width:2px;height:33px;background:#fbfbfd"></div>
<span style="left:10.40px;top:803.94px;font-size:12.3px;font-weight:bold;color:#111;letter-spacing:0.806px;-webkit-text-stroke:0.4px currentColor;">Level</span>
<span style="left:1020.50px;top:803.94px;font-size:12.3px;font-weight:bold;color:#111;letter-spacing:1.106px;-webkit-text-stroke:0.4px currentColor;">Log ID</span>
<span style="left:1323.00px;top:803.94px;font-size:12.3px;color:#111;letter-spacing:0.791px;">13</span>
<div style="left:6px;top:833px;width:2020px;height:33px;background:#ebf1fb"></div>
<div style="left:6px;top:833px;width:2020px;height:2px;background:#ebebed"></div>
<div style="left:310px;top:833px;width:2px;height:33px;background:#fbfbfd"></div>
<div style="left:1016px;top:833px;width:2px;height:33px;background:#fbfbfd"></div>
<div style="left:1317px;top:833px;width:2px;height:33px;background:#fbfbfd"></div>
<span style="left:10.40px;top:836.94px;font-size:12.3px;font-weight:bold;color:#111;letter-spacing:0.765px;-webkit-text-stroke:0.4px currentColor;">Master Src MAC</span>
<span style="left:314.50px;top:836.94px;font-size:12.3px;color:#111;letter-spacing:1.089px;">d8:fc:93:67:2b:b8</span>
<span style="left:1020.50px;top:836.94px;font-size:12.3px;font-weight:bold;color:#111;letter-spacing:0.997px;-webkit-text-stroke:0.4px currentColor;">OS Name</span>
<span style="left:1323.00px;top:836.94px;font-size:12.3px;color:#111;letter-spacing:0.526px;">Windows</span>
<div style="left:6px;top:866px;width:2020px;height:33px;background:#ffffff"></div>
<div style="left:6px;top:866px;width:2020px;height:2px;background:#ebebed"></div>
<div style="left:310px;top:866px;width:2px;height:33px;background:#fbfbfd"></div>
<div style="left:1016px;top:866px;width:2px;height:33px;background:#fbfbfd"></div>
<div style="left:1317px;top:866px;width:2px;height:33px;background:#fbfbfd"></div>
<span style="left:10.40px;top:869.94px;font-size:12.3px;font-weight:bold;color:#111;letter-spacing:0.830px;-webkit-text-stroke:0.4px currentColor;">OS Version</span>
<span style="left:314.50px;top:869.94px;font-size:12.3px;color:#111;letter-spacing:0.694px;">XP, 2000</span>
<span style="left:1020.50px;top:869.94px;font-size:12.3px;font-weight:bold;color:#111;letter-spacing:0.976px;-webkit-text-stroke:0.4px currentColor;">Policy ID</span>
<span style="left:1323.00px;top:869.94px;font-size:12.3px;color:#111;letter-spacing:0.791px;">8</span>
<div style="left:6px;top:899px;width:2020px;height:33px;background:#ebf1fb"></div>
<div style="left:6px;top:899px;width:2020px;height:2px;background:#ebebed"></div>
<div style="left:310px;top:899px;width:2px;height:33px;background:#fbfbfd"></div>
<div style="left:1016px;top:899px;width:2px;height:33px;background:#fbfbfd"></div>
<div style="left:1317px;top:899px;width:2px;height:33px;background:#fbfbfd"></div>
<span style="left:10.40px;top:902.94px;font-size:12.3px;font-weight:bold;color:#111;letter-spacing:0.955px;-webkit-text-stroke:0.4px currentColor;">Policy UUID</span>
<span style="left:314.50px;top:902.94px;font-size:12.3px;color:#111;letter-spacing:0.782px;">a0232120-2b7f-51e5-952d-192ab4da0eff</span>
<span style="left:1020.50px;top:902.94px;font-size:12.3px;font-weight:bold;color:#111;letter-spacing:0.780px;-webkit-text-stroke:0.4px currentColor;">Protocol</span>
<span style="left:1323.00px;top:902.94px;font-size:12.3px;color:#111;letter-spacing:0.675px;">udp</span>
<div style="left:6px;top:932px;width:2020px;height:33px;background:#ffffff"></div>
<div style="left:6px;top:932px;width:2020px;height:2px;background:#ebebed"></div>
<div style="left:310px;top:932px;width:2px;height:33px;background:#fbfbfd"></div>
<div style="left:1016px;top:932px;width:2px;height:33px;background:#fbfbfd"></div>
<div style="left:1317px;top:932px;width:2px;height:33px;background:#fbfbfd"></div>
<span style="left:10.40px;top:935.94px;font-size:12.3px;font-weight:bold;color:#111;letter-spacing:0.945px;-webkit-text-stroke:0.4px currentColor;">Protocol Number</span>
<span style="left:314.50px;top:935.94px;font-size:12.3px;color:#111;letter-spacing:0.791px;">17</span>
<span style="left:1020.50px;top:935.94px;font-size:12.3px;font-weight:bold;color:#111;letter-spacing:0.808px;-webkit-text-stroke:0.4px currentColor;">Received Bytes</span>
<span style="left:1323.00px;top:935.94px;font-size:12.3px;color:#111;letter-spacing:0.791px;">24289</span>
<div style="left:6px;top:965px;width:2020px;height:33px;background:#ebf1fb"></div>
<div style="left:6px;top:965px;width:2020px;height:2px;background:#ebebed"></div>
<div style="left:310px;top:965px;width:2px;height:33px;background:#fbfbfd"></div>
<div style="left:1016px;top:965px;width:2px;height:33px;background:#fbfbfd"></div>
<div style="left:1317px;top:965px;width:2px;height:33px;background:#fbfbfd"></div>
<span style="left:10.40px;top:968.94px;font-size:12.3px;font-weight:bold;color:#111;letter-spacing:0.830px;-webkit-text-stroke:0.4px currentColor;">Received Packets</span>
<span style="left:314.50px;top:968.94px;font-size:12.3px;color:#111;letter-spacing:0.791px;">288</span>
<span style="left:1020.50px;top:968.94px;font-size:12.3px;font-weight:bold;color:#111;letter-spacing:0.866px;-webkit-text-stroke:0.4px currentColor;">Received Shaper Bytes Dropped</span>
<span style="left:1323.00px;top:968.94px;font-size:12.3px;color:#111;letter-spacing:0.791px;">0</span>
<div style="left:6px;top:998px;width:2020px;height:33px;background:#ffffff"></div>
<div style="left:6px;top:998px;width:2020px;height:2px;background:#ebebed"></div>
<div style="left:310px;top:998px;width:2px;height:33px;background:#fbfbfd"></div>
<div style="left:1016px;top:998px;width:2px;height:33px;background:#fbfbfd"></div>
<div style="left:1317px;top:998px;width:2px;height:33px;background:#fbfbfd"></div>
<span style="left:10.40px;top:1001.94px;font-size:12.3px;font-weight:bold;color:#111;letter-spacing:0.952px;-webkit-text-stroke:0.4px currentColor;">Received Shaper Name</span>
<span style="left:314.50px;top:1001.94px;font-size:12.3px;color:#111;letter-spacing:-0.122px;">RSM_MANAGER</span>
<span style="left:1020.50px;top:1001.94px;font-size:12.3px;font-weight:bold;color:#111;letter-spacing:0.855px;-webkit-text-stroke:0.4px currentColor;">Sent Bytes</span>
<span style="left:1323.00px;top:1001.94px;font-size:12.3px;color:#111;letter-spacing:0.791px;">238557</span>
<div style="left:6px;top:1031px;width:2020px;height:33px;background:#ebf1fb"></div>
<div style="left:6px;top:1031px;width:2020px;height:2px;background:#ebebed"></div>
<div style="left:310px;top:1031px;width:2px;height:33px;background:#fbfbfd"></div>
<div style="left:1016px;top:1031px;width:2px;height:33px;background:#fbfbfd"></div>
<div style="left:1317px;top:1031px;width:2px;height:33px;background:#fbfbfd"></div>
<span style="left:10.40px;top:1034.94px;font-size:12.3px;font-weight:bold;color:#111;letter-spacing:0.875px;-webkit-text-stroke:0.4px currentColor;">Sent Packets</span>
<span style="left:314.50px;top:1034.94px;font-size:12.3px;color:#111;letter-spacing:0.791px;">396</span>
<span style="left:1020.50px;top:1034.94px;font-size:12.3px;font-weight:bold;color:#111;letter-spacing:0.894px;-webkit-text-stroke:0.4px currentColor;">Sent Shaper Bytes Dropped</span>
<span style="left:1323.00px;top:1034.94px;font-size:12.3px;color:#111;letter-spacing:0.791px;">0</span>
<div style="left:6px;top:1064px;width:2020px;height:33px;background:#ffffff"></div>
<div style="left:6px;top:1064px;width:2020px;height:2px;background:#ebebed"></div>
<div style="left:310px;top:1064px;width:2px;height:33px;background:#fbfbfd"></div>
<div style="left:1016px;top:1064px;width:2px;height:33px;background:#fbfbfd"></div>
<div style="left:1317px;top:1064px;width:2px;height:33px;background:#fbfbfd"></div>
<span style="left:10.40px;top:1067.94px;font-size:12.3px;font-weight:bold;color:#111;letter-spacing:1.017px;-webkit-text-stroke:0.4px currentColor;">Sent Shaper Name</span>
<span style="left:314.50px;top:1067.94px;font-size:12.3px;color:#111;letter-spacing:-0.122px;">RSM_MANAGER</span>
<span style="left:1020.50px;top:1067.94px;font-size:12.3px;font-weight:bold;color:#111;letter-spacing:0.986px;-webkit-text-stroke:0.4px currentColor;">Sequence Number</span>
<span style="left:1323.00px;top:1067.94px;font-size:12.3px;color:#111;letter-spacing:0.791px;">1539751</span>
<div style="left:6px;top:1097px;width:2020px;height:33px;background:#ebf1fb"></div>
<div style="left:6px;top:1097px;width:2020px;height:2px;background:#ebebed"></div>
<div style="left:310px;top:1097px;width:2px;height:33px;background:#fbfbfd"></div>
<div style="left:1016px;top:1097px;width:2px;height:33px;background:#fbfbfd"></div>
<div style="left:1317px;top:1097px;width:2px;height:33px;background:#fbfbfd"></div>
<span style="left:10.40px;top:1100.94px;font-size:12.3px;font-weight:bold;color:#111;letter-spacing:0.801px;-webkit-text-stroke:0.4px currentColor;">Service</span>
<span style="left:314.50px;top:1100.94px;font-size:12.3px;color:#111;letter-spacing:0.890px;">udp/50001</span>
<span style="left:1020.50px;top:1100.94px;font-size:12.3px;font-weight:bold;color:#111;letter-spacing:0.766px;-webkit-text-stroke:0.4px currentColor;">Source</span>
<div style="left:6px;top:1130px;width:2020px;height:33px;background:#ffffff"></div>
<div style="left:6px;top:1130px;width:2020px;height:2px;background:#ebebed"></div>
<div style="left:310px;top:1130px;width:2px;height:33px;background:#fbfbfd"></div>
<div style="left:1016px;top:1130px;width:2px;height:33px;background:#fbfbfd"></div>
<div style="left:1317px;top:1130px;width:2px;height:33px;background:#fbfbfd"></div>
<span style="left:10.40px;top:1133.94px;font-size:12.3px;font-weight:bold;color:#111;letter-spacing:0.815px;-webkit-text-stroke:0.4px currentColor;">Source Country</span>
<span style="left:314.50px;top:1133.94px;font-size:12.3px;color:#111;letter-spacing:0.389px;">Reserved</span>
<span style="left:1020.50px;top:1133.94px;font-size:12.3px;font-weight:bold;color:#111;letter-spacing:1.038px;-webkit-text-stroke:0.4px currentColor;">Source Interface</span>
<span style="left:1323.00px;top:1133.94px;font-size:12.3px;color:#111;letter-spacing:0.833px;">unknown-0</span>
<div style="left:6px;top:1163px;width:2020px;height:33px;background:#ebf1fb"></div>
<div style="left:6px;top:1163px;width:2020px;height:2px;background:#ebebed"></div>
<div style="left:310px;top:1163px;width:2px;height:33px;background:#fbfbfd"></div>
<div style="left:1016px;top:1163px;width:2px;height:33px;background:#fbfbfd"></div>
<div style="left:1317px;top:1163px;width:2px;height:33px;background:#fbfbfd"></div>
<span style="left:10.40px;top:1166.94px;font-size:12.3px;font-weight:bold;color:#111;letter-spacing:0.833px;-webkit-text-stroke:0.4px currentColor;">Source Port</span>
<span style="left:314.50px;top:1166.94px;font-size:12.3px;color:#111;letter-spacing:0.791px;">14679</span>
<span style="left:1020.50px;top:1166.94px;font-size:12.3px;font-weight:bold;color:#111;letter-spacing:1.010px;-webkit-text-stroke:0.4px currentColor;">Src NAT IP</span>
<span style="left:1323.00px;top:1166.94px;font-size:12.3px;color:#111;letter-spacing:0.825px;">187.157.127.34</span>
<div style="left:6px;top:1196px;width:2020px;height:27px;background:#ffffff"></div>
<div style="left:6px;top:1196px;width:2020px;height:2px;background:#ebebed"></div>
<div style="left:310px;top:1196px;width:2px;height:27px;background:#fbfbfd"></div>
<div style="left:1016px;top:1196px;width:2px;height:27px;background:#fbfbfd"></div>
<div style="left:1317px;top:1196px;width:2px;height:27px;background:#fbfbfd"></div>
<span style="left:10.40px;top:1199.94px;font-size:12.3px;font-weight:bold;color:#111;letter-spacing:0.854px;-webkit-text-stroke:0.4px currentColor;">Src NAT Port</span>
<span style="left:314.50px;top:1199.94px;font-size:12.3px;color:#111;letter-spacing:0.791px;">14679</span>
<span style="left:1020.50px;top:1199.94px;font-size:12.3px;font-weight:bold;color:#111;letter-spacing:0.967px;-webkit-text-stroke:0.4px currentColor;">Src Name</span>
<span style="left:1323.00px;top:1199.94px;font-size:12.3px;color:#111;letter-spacing:0.193px;">RSMLAP-090</span>
<svg style="left:314px;top:806px" width="54" height="10" viewBox="0 0 54 10"><rect width="54" height="10" fill="#e4e4e4"/><rect x="0" y="0" width="16" height="10" fill="#7fe8d8"/><rect x="16" y="0" width="1" height="10" fill="#f4f4f4"/><rect x="26" y="0" width="1" height="10" fill="#f4f4f4"/><rect x="36" y="0" width="1" height="10" fill="#f4f4f4"/><rect x="46" y="0" width="1" height="10" fill="#f4f4f4"/></svg>
<svg style="left:1323px;top:1103px" width="16" height="17" viewBox="0 0 16 17"><rect x="0" y="0" width="16" height="16.5" rx="1" fill="#2e62a6"/><rect x="1.5" y="1.5" width="13" height="10" fill="#aee6fb"/><rect x="3.5" y="3.5" width="9" height="6" fill="none" stroke="#5aa2d8" stroke-width="1"/><rect x="1.5" y="13" width="13" height="2" fill="#9fe0fa"/></svg>
<span style="left:1348.50px;top:1100.94px;font-size:12.3px;color:#111;letter-spacing:0.626px;">oscar.reyes Laptop Dell Presicion (10.180.12.5)</span>
<div style="left:5px;top:1223px;width:2022px;height:1.5px;background:#444"></div>
<div style="left:5px;top:1224.5px;width:2022px;height:3px;background:#e4e4e4"></div>
<div style="left:2026px;top:757px;width:1px;height:466px;background:#333"></div>
<div style="left:149px;top:40px;width:151.5px;height:665px;border:5px solid #e6665a;box-sizing:border-box;box-shadow:1.5px 1.5px 1.5px rgba(40,30,35,.8), inset 1.5px 1.5px 1.2px rgba(50,35,40,.85)"></div>
<div style="left:1011px;top:1123.5px;width:417px;height:41.5px;border:5px solid #e6665a;box-sizing:border-box;box-shadow:1.5px 1.5px 1.5px rgba(40,30,35,.8), inset 1.5px 1.5px 1.2px rgba(50,35,40,.85)"></div>
<svg style="left:785px;top:747px" width="12" height="18" viewBox="0 0 12 18"><path d="M1 1 L1 14 L4 11 L6.5 16.5 L8.5 15.5 L6 10 L10 10 Z" fill="#111" stroke="#fff" stroke-width="1"/></svg>
</body></html>
